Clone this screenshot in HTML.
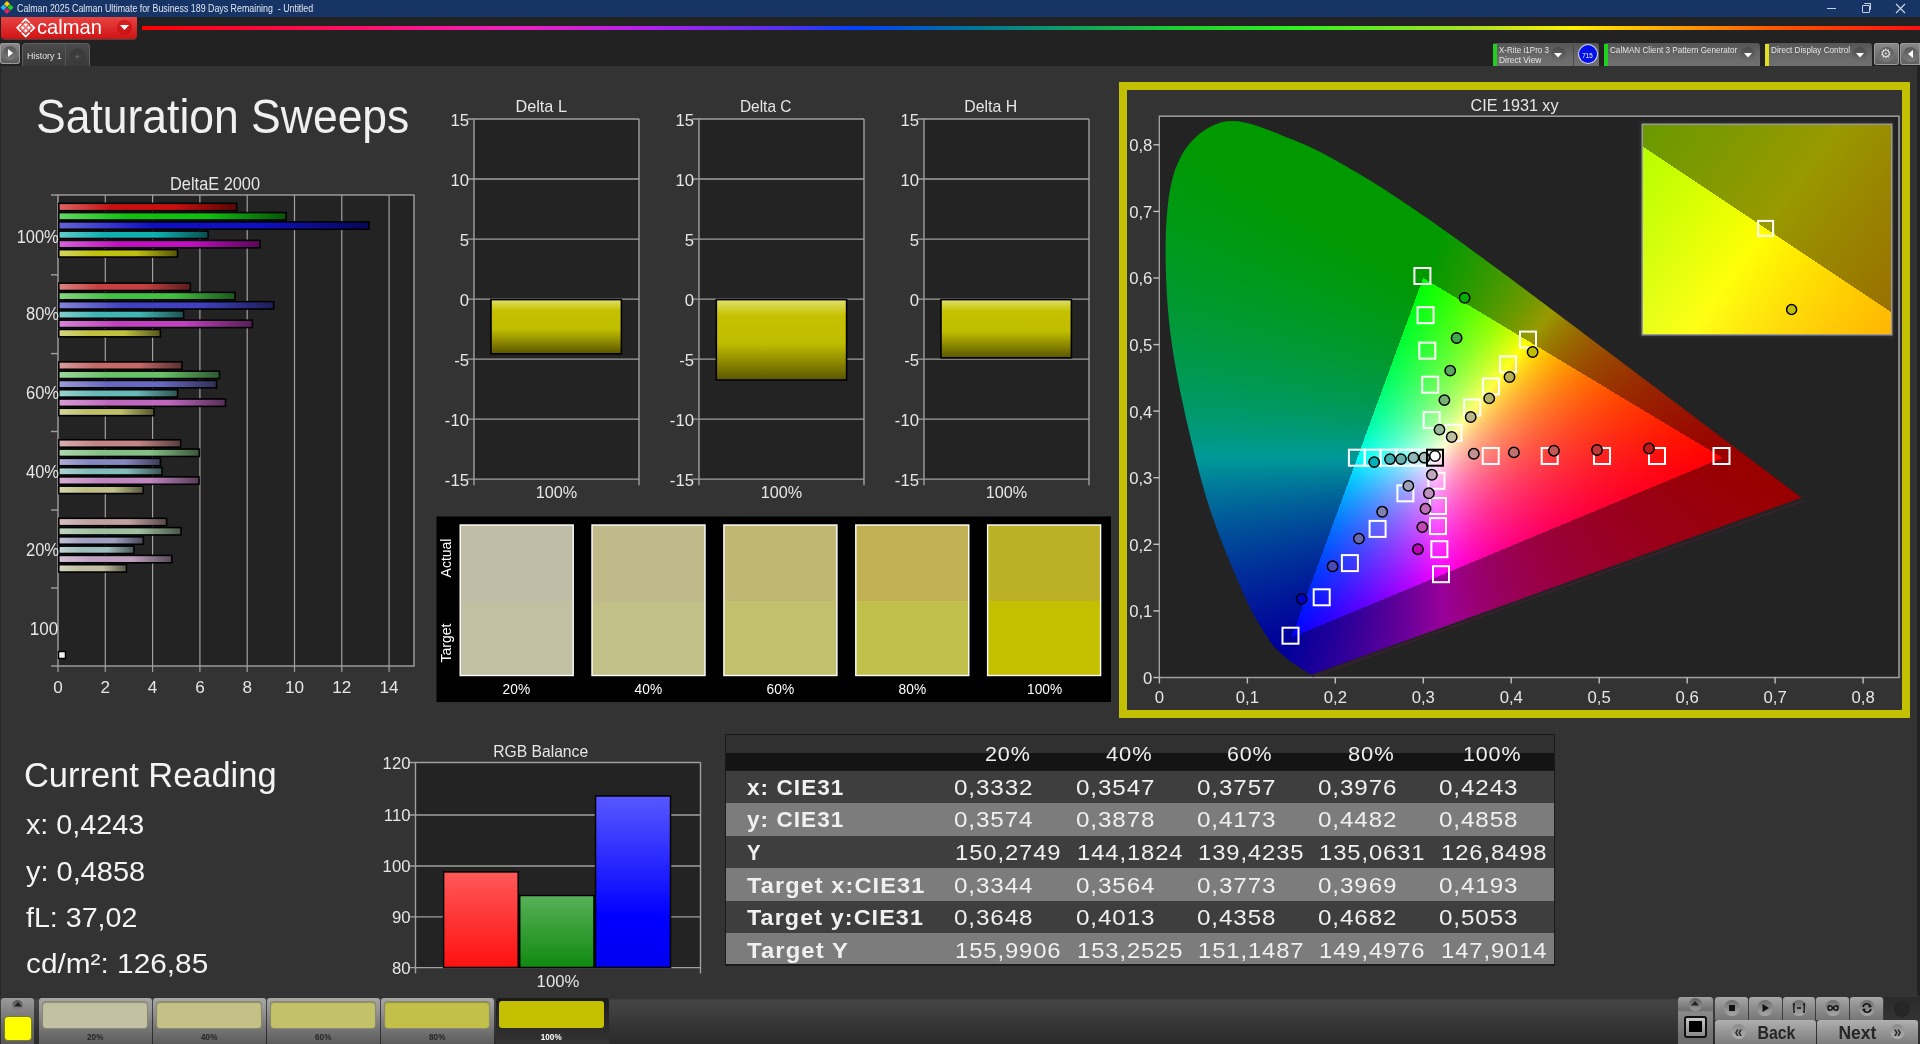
<!DOCTYPE html>
<html><head><meta charset="utf-8">
<style>
html,body{margin:0;padding:0;width:1920px;height:1044px;overflow:hidden;background:#333333;font-family:"Liberation Sans",sans-serif;}
.a{position:absolute;}
.nw{white-space:nowrap;}
svg text{font-family:"Liberation Sans",sans-serif;}
</style></head>
<body>
<div class="a" style="left:0;top:0;width:1920px;height:1044px;background:#333333"></div><div class="a" style="left:0;top:0;width:1920px;height:17px;background:#163466"></div><svg class="a" style="left:0;top:0" width="16" height="17" viewBox="0 0 16 17">
<polygon points="7,1 10,4 7,7 4,4" fill="#f5d000"/>
<polygon points="3.5,4.5 6.5,7.5 3.5,10.5 0.5,7.5" fill="#20b8f0"/>
<polygon points="10.5,4.5 13.5,7.5 10.5,10.5 7.5,7.5" fill="#20d020"/>
<polygon points="7,8 10,11 7,14 4,11" fill="#e82060"/>
</svg><div class="a nw" style="left:17.00px;top:2.47px;width:352.75px;font-size:10.47px;line-height:13px;color:#dfe5ef;transform:scaleX(0.8439);transform-origin:0 0;">Calman 2025 Calman Ultimate for Business 189 Days Remaining  - Untitled</div><div class="a" style="left:1827px;top:8px;width:9px;height:1px;background:#c8d0e0"></div><div class="a" style="left:1862px;top:5px;width:6px;height:6px;border:1px solid #c8d0e0;border-radius:1px"></div><div class="a" style="left:1864px;top:3px;width:6px;height:6px;border-top:1px solid #c8d0e0;border-right:1px solid #c8d0e0;border-radius:1px"></div><svg class="a" style="left:1895px;top:3px" width="11" height="11"><path d="M1,1 L10,10 M10,1 L1,10" stroke="#d0d8e8" stroke-width="1.1"/></svg><div class="a" style="left:0;top:17px;width:1920px;height:49px;background:#222222"></div><div class="a" style="left:1px;top:17px;width:136px;height:22px;border-radius:0 0 4px 4px;background:linear-gradient(#e84443,#d01212);box-shadow:0 1px 0 #444"></div><svg class="a" style="left:0;top:0" width="60" height="42">
<g fill="none" stroke="#fff" stroke-width="1.7" stroke-linecap="round">
<path d="M22.2,22.5 L25.7,19 L29.2,22.5"/>
<path d="M20.7,24.3 L17.2,27.8 L20.7,31.3"/>
<path d="M30.8,24.3 L34.3,27.8 L30.8,31.3"/>
<path d="M22.2,33.1 L25.7,36.6 L29.2,33.1"/>
</g>
<g fill="#fff">
<polygon points="25.75,22.9 27.5,24.65 25.75,26.4 24,24.65"/>
<polygon points="22.76,25.95 24.5,27.7 22.76,29.45 21,27.7"/>
<polygon points="28.75,25.95 30.5,27.7 28.75,29.45 27,27.7"/>
<polygon points="25.75,28.95 27.5,30.7 25.75,32.45 24,30.7"/>
</g>
<g fill="#fff" opacity="0.35"><polygon points="25.7,21.5 32,27.8 25.7,34.1 19.4,27.8"/></g>
</svg><div class="a nw" style="left:36.60px;top:14.19px;width:69.01px;font-size:20.78px;line-height:25px;color:#ffffff;transform:scaleX(0.9701);transform-origin:0 0;">calman</div><div class="a" style="left:117px;top:20px;width:15px;height:15px;border-radius:50%;background:radial-gradient(circle at 50% 30%,#d82020,#c01010)"></div><svg class="a" style="left:120px;top:25px" width="9" height="6"><polygon points="0,0 9,0 4.5,5" fill="#fff"/></svg><div class="a" style="left:142px;top:26px;width:1778px;height:4px;background:linear-gradient(90deg,#ff0000 0%,#ff1070 12.9%,#f020c0 20.8%,#b020f0 28.6%,#5030f0 36.4%,#0040ff 40.1%,#0070a0 46.2%,#10a060 52.4%,#20d030 58.5%,#30f020 65.1%,#b0e020 75.1%,#ffee00 80.5%,#ffb000 85.1%,#ff5000 92.4%,#ff1010 100%)"></div><div class="a" style="left:0;top:43px;width:20px;height:21px;border-radius:3px;background:linear-gradient(#8a8a8a,#5a5a5a);box-shadow:inset 0 0 0 1px #9a9a9a"></div><div class="a" style="left:3px;top:46px;width:14px;height:14px;border-radius:50%;background:linear-gradient(#555,#7a7a7a)"></div><svg class="a" style="left:8px;top:49px" width="6" height="9"><polygon points="0,0 5,4 0,8" fill="#fff"/></svg><div class="a" style="left:22px;top:43px;width:68px;height:23px;box-sizing:border-box;border:1px solid #606060;border-bottom:none;border-radius:4px 4px 0 0;background:linear-gradient(#4a4a4a,#3a3a3a)"></div><div class="a" style="left:65px;top:44px;width:1px;height:22px;background:#555"></div><div class="a nw" style="left:26.50px;top:50.32px;width:41.00px;font-size:9.88px;line-height:12px;color:#e0e0e0;transform:scaleX(0.8924);transform-origin:0 0;">History 1</div><div class="a" style="left:70.5px;top:49px;width:14px;height:14px;border-radius:50%;background:#3c3c3c;box-shadow:0 0 1px #2a2a2a"></div><div class="a nw" style="left:74.5px;top:50.5px;font-size:9px;line-height:12px;color:#777">+</div><div class="a" style="left:1492.6px;top:43.3px;width:106.6px;height:22.7px;border-radius:3px 3px 0 0;background:linear-gradient(#555,#6a6a6a 60%,#707070)"></div><div class="a" style="left:1493.1px;top:44px;width:4px;height:22px;background:#20d020"></div><div class="a nw" style="left:1498.60px;top:44.53px;width:55.38px;font-size:8.58px;line-height:11px;color:#e4e4e4;transform:scaleX(0.9367);transform-origin:0 0;">X-Rite i1Pro 3</div><div class="a nw" style="left:1498.60px;top:55.33px;width:45.21px;font-size:8.58px;line-height:11px;color:#e4e4e4;transform:scaleX(0.9812);transform-origin:0 0;">Direct View</div><div class="a" style="left:1550.5px;top:46.8px;width:15px;height:15px;border-radius:50%;background:linear-gradient(#4a4a4a,#6e6e6e)"></div><svg class="a" style="left:1554.0px;top:52.5px" width="8" height="5"><polygon points="0,0 8,0 4,4.5" fill="#fff"/></svg><div class="a" style="left:1572.5px;top:45px;width:1px;height:21px;background:#4a4a4a"></div><div class="a" style="left:1578.5px;top:45px;width:18px;height:18px;border-radius:50%;background:#0010e8;box-shadow:0 0 0 1px #d8d8ff"></div><div class="a nw" style="left:1581.19px;top:50.68px;width:14.61px;font-size:7.56px;line-height:10px;color:#fff;transform:scaleX(0.8326);transform-origin:50% 0;">715</div><div class="a" style="left:1603.8px;top:43.3px;width:156.2px;height:22.7px;border-radius:3px 3px 0 0;background:linear-gradient(#555,#6a6a6a 60%,#707070)"></div><div class="a" style="left:1604.3px;top:44px;width:4px;height:22px;background:#20d020"></div><div class="a nw" style="left:1609.80px;top:44.53px;width:136.41px;font-size:8.58px;line-height:11px;color:#e4e4e4;transform:scaleX(0.9463);transform-origin:0 0;">CalMAN Client 3 Pattern Generator</div><div class="a" style="left:1740.2px;top:46.8px;width:15px;height:15px;border-radius:50%;background:linear-gradient(#4a4a4a,#6e6e6e)"></div><svg class="a" style="left:1743.7px;top:52.5px" width="8" height="5"><polygon points="0,0 8,0 4,4.5" fill="#fff"/></svg><div class="a" style="left:1764.6px;top:43.3px;width:107.3px;height:22.7px;border-radius:3px 3px 0 0;background:linear-gradient(#555,#6a6a6a 60%,#707070)"></div><div class="a" style="left:1765.1px;top:44px;width:4px;height:22px;background:#e0e020"></div><div class="a nw" style="left:1770.60px;top:44.53px;width:84.92px;font-size:8.58px;line-height:11px;color:#e4e4e4;transform:scaleX(0.9527);transform-origin:0 0;">Direct Display Control</div><div class="a" style="left:1852.3px;top:46.8px;width:15px;height:15px;border-radius:50%;background:linear-gradient(#4a4a4a,#6e6e6e)"></div><svg class="a" style="left:1855.8px;top:52.5px" width="8" height="5"><polygon points="0,0 8,0 4,4.5" fill="#fff"/></svg><div class="a" style="left:1874px;top:43px;width:25px;height:22px;border-radius:3px;background:linear-gradient(#8a8a8a,#5e5e5e);box-shadow:inset 0 0 0 1px #9a9a9a"></div><div class="a" style="left:1879px;top:47px;width:15px;height:15px;border-radius:50%;background:linear-gradient(#5a5a5a,#7a7a7a)"></div><div class="a nw" style="left:1880px;top:46px;font-size:13px;line-height:15px;color:#ddd">&#9881;</div><div class="a" style="left:1900px;top:43px;width:20px;height:22px;border-radius:3px 0 0 3px;background:linear-gradient(#8a8a8a,#5e5e5e);box-shadow:inset 0 0 0 1px #9a9a9a"></div><div class="a" style="left:1903px;top:47px;width:15px;height:15px;border-radius:50%;background:linear-gradient(#5a5a5a,#7a7a7a)"></div><svg class="a" style="left:1907px;top:50px" width="6" height="9"><polygon points="6,0 1,4 6,8" fill="#fff"/></svg><div class="a" style="left:0;top:66px;width:1px;height:930px;background:#262626"></div><div class="a nw" style="left:35.60px;top:88.17px;width:402.19px;font-size:47.67px;line-height:58px;color:#f0f0f0;transform:scaleX(0.9333);transform-origin:0 0;">Saturation Sweeps</div><svg class="a" style="left:0;top:0" width="1920" height="1044"><defs><linearGradient id="de1" x1="0" x2="1" y1="0" y2="0"><stop offset="0" stop-color="#db6464"/><stop offset="0.3" stop-color="#c81010"/><stop offset="0.65" stop-color="#c81010"/><stop offset="1" stop-color="#5a0707"/></linearGradient><linearGradient id="de2" x1="0" x2="1" y1="0" y2="0"><stop offset="0" stop-color="#64d664"/><stop offset="0.3" stop-color="#10c010"/><stop offset="0.65" stop-color="#10c010"/><stop offset="1" stop-color="#075607"/></linearGradient><linearGradient id="de3" x1="0" x2="1" y1="0" y2="0"><stop offset="0" stop-color="#6464d6"/><stop offset="0.3" stop-color="#1010c0"/><stop offset="0.65" stop-color="#1010c0"/><stop offset="1" stop-color="#070756"/></linearGradient><linearGradient id="de4" x1="0" x2="1" y1="0" y2="0"><stop offset="0" stop-color="#64cccc"/><stop offset="0.3" stop-color="#10b0b0"/><stop offset="0.65" stop-color="#10b0b0"/><stop offset="1" stop-color="#074f4f"/></linearGradient><linearGradient id="de5" x1="0" x2="1" y1="0" y2="0"><stop offset="0" stop-color="#d664d6"/><stop offset="0.3" stop-color="#c010c0"/><stop offset="0.65" stop-color="#c010c0"/><stop offset="1" stop-color="#560756"/></linearGradient><linearGradient id="de6" x1="0" x2="1" y1="0" y2="0"><stop offset="0" stop-color="#d6d664"/><stop offset="0.3" stop-color="#c0c010"/><stop offset="0.65" stop-color="#c0c010"/><stop offset="1" stop-color="#565607"/></linearGradient><linearGradient id="de7" x1="0" x2="1" y1="0" y2="0"><stop offset="0" stop-color="#da8484"/><stop offset="0.3" stop-color="#c64141"/><stop offset="0.65" stop-color="#c64141"/><stop offset="1" stop-color="#591d1d"/></linearGradient><linearGradient id="de8" x1="0" x2="1" y1="0" y2="0"><stop offset="0" stop-color="#84d684"/><stop offset="0.3" stop-color="#41c041"/><stop offset="0.65" stop-color="#41c041"/><stop offset="1" stop-color="#1d561d"/></linearGradient><linearGradient id="de9" x1="0" x2="1" y1="0" y2="0"><stop offset="0" stop-color="#8484d6"/><stop offset="0.3" stop-color="#4141c0"/><stop offset="0.65" stop-color="#4141c0"/><stop offset="1" stop-color="#1d1d56"/></linearGradient><linearGradient id="de10" x1="0" x2="1" y1="0" y2="0"><stop offset="0" stop-color="#84cfcf"/><stop offset="0.3" stop-color="#41b4b4"/><stop offset="0.65" stop-color="#41b4b4"/><stop offset="1" stop-color="#1d5151"/></linearGradient><linearGradient id="de11" x1="0" x2="1" y1="0" y2="0"><stop offset="0" stop-color="#d684d6"/><stop offset="0.3" stop-color="#c041c0"/><stop offset="0.65" stop-color="#c041c0"/><stop offset="1" stop-color="#561d56"/></linearGradient><linearGradient id="de12" x1="0" x2="1" y1="0" y2="0"><stop offset="0" stop-color="#d6d684"/><stop offset="0.3" stop-color="#c0c041"/><stop offset="0.65" stop-color="#c0c041"/><stop offset="1" stop-color="#56561d"/></linearGradient><linearGradient id="de13" x1="0" x2="1" y1="0" y2="0"><stop offset="0" stop-color="#d99d9d"/><stop offset="0.3" stop-color="#c46868"/><stop offset="0.65" stop-color="#c46868"/><stop offset="1" stop-color="#582f2f"/></linearGradient><linearGradient id="de14" x1="0" x2="1" y1="0" y2="0"><stop offset="0" stop-color="#9dd69d"/><stop offset="0.3" stop-color="#68c068"/><stop offset="0.65" stop-color="#68c068"/><stop offset="1" stop-color="#2f562f"/></linearGradient><linearGradient id="de15" x1="0" x2="1" y1="0" y2="0"><stop offset="0" stop-color="#9d9dd6"/><stop offset="0.3" stop-color="#6868c0"/><stop offset="0.65" stop-color="#6868c0"/><stop offset="1" stop-color="#2f2f56"/></linearGradient><linearGradient id="de16" x1="0" x2="1" y1="0" y2="0"><stop offset="0" stop-color="#9dd1d1"/><stop offset="0.3" stop-color="#68b8b8"/><stop offset="0.65" stop-color="#68b8b8"/><stop offset="1" stop-color="#2f5353"/></linearGradient><linearGradient id="de17" x1="0" x2="1" y1="0" y2="0"><stop offset="0" stop-color="#d69dd6"/><stop offset="0.3" stop-color="#c068c0"/><stop offset="0.65" stop-color="#c068c0"/><stop offset="1" stop-color="#562f56"/></linearGradient><linearGradient id="de18" x1="0" x2="1" y1="0" y2="0"><stop offset="0" stop-color="#d6d69d"/><stop offset="0.3" stop-color="#c0c068"/><stop offset="0.65" stop-color="#c0c068"/><stop offset="1" stop-color="#56562f"/></linearGradient><linearGradient id="de19" x1="0" x2="1" y1="0" y2="0"><stop offset="0" stop-color="#d8b0b0"/><stop offset="0.3" stop-color="#c38686"/><stop offset="0.65" stop-color="#c38686"/><stop offset="1" stop-color="#583c3c"/></linearGradient><linearGradient id="de20" x1="0" x2="1" y1="0" y2="0"><stop offset="0" stop-color="#b0d6b0"/><stop offset="0.3" stop-color="#86c086"/><stop offset="0.65" stop-color="#86c086"/><stop offset="1" stop-color="#3c563c"/></linearGradient><linearGradient id="de21" x1="0" x2="1" y1="0" y2="0"><stop offset="0" stop-color="#b0b0d6"/><stop offset="0.3" stop-color="#8686c0"/><stop offset="0.65" stop-color="#8686c0"/><stop offset="1" stop-color="#3c3c56"/></linearGradient><linearGradient id="de22" x1="0" x2="1" y1="0" y2="0"><stop offset="0" stop-color="#b0d3d3"/><stop offset="0.3" stop-color="#86bbbb"/><stop offset="0.65" stop-color="#86bbbb"/><stop offset="1" stop-color="#3c5454"/></linearGradient><linearGradient id="de23" x1="0" x2="1" y1="0" y2="0"><stop offset="0" stop-color="#d6b0d6"/><stop offset="0.3" stop-color="#c086c0"/><stop offset="0.65" stop-color="#c086c0"/><stop offset="1" stop-color="#563c56"/></linearGradient><linearGradient id="de24" x1="0" x2="1" y1="0" y2="0"><stop offset="0" stop-color="#d6d6b0"/><stop offset="0.3" stop-color="#c0c086"/><stop offset="0.65" stop-color="#c0c086"/><stop offset="1" stop-color="#56563c"/></linearGradient><linearGradient id="de25" x1="0" x2="1" y1="0" y2="0"><stop offset="0" stop-color="#d7c1c1"/><stop offset="0.3" stop-color="#c1a0a0"/><stop offset="0.65" stop-color="#c1a0a0"/><stop offset="1" stop-color="#574848"/></linearGradient><linearGradient id="de26" x1="0" x2="1" y1="0" y2="0"><stop offset="0" stop-color="#c1d6c1"/><stop offset="0.3" stop-color="#a0c0a0"/><stop offset="0.65" stop-color="#a0c0a0"/><stop offset="1" stop-color="#485648"/></linearGradient><linearGradient id="de27" x1="0" x2="1" y1="0" y2="0"><stop offset="0" stop-color="#c1c1d6"/><stop offset="0.3" stop-color="#a0a0c0"/><stop offset="0.65" stop-color="#a0a0c0"/><stop offset="1" stop-color="#484856"/></linearGradient><linearGradient id="de28" x1="0" x2="1" y1="0" y2="0"><stop offset="0" stop-color="#c1d4d4"/><stop offset="0.3" stop-color="#a0bdbd"/><stop offset="0.65" stop-color="#a0bdbd"/><stop offset="1" stop-color="#485555"/></linearGradient><linearGradient id="de29" x1="0" x2="1" y1="0" y2="0"><stop offset="0" stop-color="#d6c1d6"/><stop offset="0.3" stop-color="#c0a0c0"/><stop offset="0.65" stop-color="#c0a0c0"/><stop offset="1" stop-color="#564856"/></linearGradient><linearGradient id="de30" x1="0" x2="1" y1="0" y2="0"><stop offset="0" stop-color="#d6d6c1"/><stop offset="0.3" stop-color="#c0c0a0"/><stop offset="0.65" stop-color="#c0c0a0"/><stop offset="1" stop-color="#565648"/></linearGradient><linearGradient id="ybar" x1="0" x2="0" y1="0" y2="1"><stop offset="0" stop-color="#e0e070"/><stop offset="0.2" stop-color="#c6c200"/><stop offset="0.55" stop-color="#c0bc00"/><stop offset="1" stop-color="#5a5600"/></linearGradient><linearGradient id="rb" x1="0" x2="0" y1="0" y2="1"><stop offset="0" stop-color="#ff5858"/><stop offset="1" stop-color="#ff1010"/></linearGradient><linearGradient id="gb" x1="0" x2="0" y1="0" y2="1"><stop offset="0" stop-color="#58b058"/><stop offset="1" stop-color="#108a10"/></linearGradient><linearGradient id="bb" x1="0" x2="0" y1="0" y2="1"><stop offset="0" stop-color="#5858ff"/><stop offset="0.7" stop-color="#0000ff"/><stop offset="1" stop-color="#0000f0"/></linearGradient></defs><rect x="58" y="195" width="356" height="471" fill="#232323"/><line x1="105.3" y1="195" x2="105.3" y2="672" stroke="#a0a0a0" stroke-width="1.2"/><line x1="152.6" y1="195" x2="152.6" y2="672" stroke="#a0a0a0" stroke-width="1.2"/><line x1="199.9" y1="195" x2="199.9" y2="672" stroke="#a0a0a0" stroke-width="1.2"/><line x1="247.2" y1="195" x2="247.2" y2="672" stroke="#a0a0a0" stroke-width="1.2"/><line x1="294.5" y1="195" x2="294.5" y2="672" stroke="#a0a0a0" stroke-width="1.2"/><line x1="341.8" y1="195" x2="341.8" y2="672" stroke="#a0a0a0" stroke-width="1.2"/><line x1="389.1" y1="195" x2="389.1" y2="672" stroke="#a0a0a0" stroke-width="1.2"/><rect x="58.0" y="195.0" width="356" height="471" fill="none" stroke="#a0a0a0" stroke-width="1.4"/><line x1="58.0" y1="666" x2="58.0" y2="672" stroke="#a0a0a0" stroke-width="1.2"/><line x1="51" y1="195.0" x2="58" y2="195.0" stroke="#a0a0a0" stroke-width="1.4"/><line x1="51" y1="274.8" x2="58" y2="274.8" stroke="#a0a0a0" stroke-width="1.4"/><line x1="51" y1="353.6" x2="58" y2="353.6" stroke="#a0a0a0" stroke-width="1.4"/><line x1="51" y1="431.5" x2="58" y2="431.5" stroke="#a0a0a0" stroke-width="1.4"/><line x1="51" y1="510.0" x2="58" y2="510.0" stroke="#a0a0a0" stroke-width="1.4"/><line x1="51" y1="588.0" x2="58" y2="588.0" stroke="#a0a0a0" stroke-width="1.4"/><line x1="51" y1="666.0" x2="58" y2="666.0" stroke="#a0a0a0" stroke-width="1.4"/><rect x="58.8" y="203.30" width="177.9" height="7.4" fill="url(#de1)" stroke="#000" stroke-width="1.6"/><rect x="58.8" y="212.57" width="227.2" height="7.4" fill="url(#de2)" stroke="#000" stroke-width="1.6"/><rect x="58.8" y="221.84" width="310.2" height="7.4" fill="url(#de3)" stroke="#000" stroke-width="1.6"/><rect x="58.8" y="231.11" width="149.2" height="7.4" fill="url(#de4)" stroke="#000" stroke-width="1.6"/><rect x="58.8" y="240.38" width="201.2" height="7.4" fill="url(#de5)" stroke="#000" stroke-width="1.6"/><rect x="58.8" y="249.65" width="118.7" height="7.4" fill="url(#de6)" stroke="#000" stroke-width="1.6"/><rect x="58.8" y="283.10" width="131.6" height="7.4" fill="url(#de7)" stroke="#000" stroke-width="1.6"/><rect x="58.8" y="292.37" width="176.2" height="7.4" fill="url(#de8)" stroke="#000" stroke-width="1.6"/><rect x="58.8" y="301.64" width="214.9" height="7.4" fill="url(#de9)" stroke="#000" stroke-width="1.6"/><rect x="58.8" y="310.91" width="124.8" height="7.4" fill="url(#de10)" stroke="#000" stroke-width="1.6"/><rect x="58.8" y="320.18" width="193.6" height="7.4" fill="url(#de11)" stroke="#000" stroke-width="1.6"/><rect x="58.8" y="329.45" width="101.6" height="7.4" fill="url(#de12)" stroke="#000" stroke-width="1.6"/><rect x="58.8" y="361.90" width="123.2" height="7.4" fill="url(#de13)" stroke="#000" stroke-width="1.6"/><rect x="58.8" y="371.17" width="160.7" height="7.4" fill="url(#de14)" stroke="#000" stroke-width="1.6"/><rect x="58.8" y="380.44" width="157.8" height="7.4" fill="url(#de15)" stroke="#000" stroke-width="1.6"/><rect x="58.8" y="389.71" width="118.8" height="7.4" fill="url(#de16)" stroke="#000" stroke-width="1.6"/><rect x="58.8" y="398.98" width="166.7" height="7.4" fill="url(#de17)" stroke="#000" stroke-width="1.6"/><rect x="58.8" y="408.25" width="95.2" height="7.4" fill="url(#de18)" stroke="#000" stroke-width="1.6"/><rect x="58.8" y="439.80" width="121.9" height="7.4" fill="url(#de19)" stroke="#000" stroke-width="1.6"/><rect x="58.8" y="449.07" width="140.5" height="7.4" fill="url(#de20)" stroke="#000" stroke-width="1.6"/><rect x="58.8" y="458.34" width="101.6" height="7.4" fill="url(#de21)" stroke="#000" stroke-width="1.6"/><rect x="58.8" y="467.61" width="103.2" height="7.4" fill="url(#de22)" stroke="#000" stroke-width="1.6"/><rect x="58.8" y="476.88" width="140.2" height="7.4" fill="url(#de23)" stroke="#000" stroke-width="1.6"/><rect x="58.8" y="486.15" width="84.5" height="7.4" fill="url(#de24)" stroke="#000" stroke-width="1.6"/><rect x="58.8" y="518.30" width="107.8" height="7.4" fill="url(#de25)" stroke="#000" stroke-width="1.6"/><rect x="58.8" y="527.57" width="122.2" height="7.4" fill="url(#de26)" stroke="#000" stroke-width="1.6"/><rect x="58.8" y="536.84" width="84.5" height="7.4" fill="url(#de27)" stroke="#000" stroke-width="1.6"/><rect x="58.8" y="546.11" width="75.2" height="7.4" fill="url(#de28)" stroke="#000" stroke-width="1.6"/><rect x="58.8" y="555.38" width="113.0" height="7.4" fill="url(#de29)" stroke="#000" stroke-width="1.6"/><rect x="58.8" y="564.65" width="67.7" height="7.4" fill="url(#de30)" stroke="#000" stroke-width="1.6"/><rect x="58.5" y="651.5" width="7" height="7" fill="#f0f0f0" stroke="#000" stroke-width="1.5"/><rect x="474" y="119" width="165" height="360.2" fill="#232323"/><line x1="467" y1="119.0" x2="639" y2="119.0" stroke="#a0a0a0" stroke-width="1.3"/><line x1="467" y1="179.0" x2="639" y2="179.0" stroke="#a0a0a0" stroke-width="1.3"/><line x1="467" y1="239.1" x2="639" y2="239.1" stroke="#a0a0a0" stroke-width="1.3"/><line x1="467" y1="299.1" x2="639" y2="299.1" stroke="#a0a0a0" stroke-width="1.3"/><line x1="467" y1="359.1" x2="639" y2="359.1" stroke="#a0a0a0" stroke-width="1.3"/><line x1="467" y1="419.1" x2="639" y2="419.1" stroke="#a0a0a0" stroke-width="1.3"/><line x1="467" y1="479.2" x2="639" y2="479.2" stroke="#a0a0a0" stroke-width="1.3"/><line x1="474" y1="119" x2="474" y2="485.2" stroke="#a0a0a0" stroke-width="1.4"/><line x1="639" y1="119" x2="639" y2="485.2" stroke="#a0a0a0" stroke-width="1.4"/><rect x="491.0" y="299.6" width="130.4" height="54.2" fill="url(#ybar)" stroke="#000" stroke-width="1.6"/><rect x="699" y="119" width="165" height="360.2" fill="#232323"/><line x1="692" y1="119.0" x2="864" y2="119.0" stroke="#a0a0a0" stroke-width="1.3"/><line x1="692" y1="179.0" x2="864" y2="179.0" stroke="#a0a0a0" stroke-width="1.3"/><line x1="692" y1="239.1" x2="864" y2="239.1" stroke="#a0a0a0" stroke-width="1.3"/><line x1="692" y1="299.1" x2="864" y2="299.1" stroke="#a0a0a0" stroke-width="1.3"/><line x1="692" y1="359.1" x2="864" y2="359.1" stroke="#a0a0a0" stroke-width="1.3"/><line x1="692" y1="419.1" x2="864" y2="419.1" stroke="#a0a0a0" stroke-width="1.3"/><line x1="692" y1="479.2" x2="864" y2="479.2" stroke="#a0a0a0" stroke-width="1.3"/><line x1="699" y1="119" x2="699" y2="485.2" stroke="#a0a0a0" stroke-width="1.4"/><line x1="864" y1="119" x2="864" y2="485.2" stroke="#a0a0a0" stroke-width="1.4"/><rect x="716.3" y="299.6" width="130.3" height="80.4" fill="url(#ybar)" stroke="#000" stroke-width="1.6"/><rect x="924" y="119" width="165" height="360.2" fill="#232323"/><line x1="917" y1="119.0" x2="1089" y2="119.0" stroke="#a0a0a0" stroke-width="1.3"/><line x1="917" y1="179.0" x2="1089" y2="179.0" stroke="#a0a0a0" stroke-width="1.3"/><line x1="917" y1="239.1" x2="1089" y2="239.1" stroke="#a0a0a0" stroke-width="1.3"/><line x1="917" y1="299.1" x2="1089" y2="299.1" stroke="#a0a0a0" stroke-width="1.3"/><line x1="917" y1="359.1" x2="1089" y2="359.1" stroke="#a0a0a0" stroke-width="1.3"/><line x1="917" y1="419.1" x2="1089" y2="419.1" stroke="#a0a0a0" stroke-width="1.3"/><line x1="917" y1="479.2" x2="1089" y2="479.2" stroke="#a0a0a0" stroke-width="1.3"/><line x1="924" y1="119" x2="924" y2="485.2" stroke="#a0a0a0" stroke-width="1.4"/><line x1="1089" y1="119" x2="1089" y2="485.2" stroke="#a0a0a0" stroke-width="1.4"/><rect x="941.0" y="299.6" width="130.4" height="58.2" fill="url(#ybar)" stroke="#000" stroke-width="1.6"/><rect x="436.5" y="516.5" width="674.5" height="185.5" fill="#000"/><rect x="460.2" y="525" width="113" height="75.5" fill="#bfbda5"/><rect x="460.2" y="600.5" width="113" height="75" fill="#c1c0a2"/><rect x="460.2" y="525" width="113" height="76" fill="#bfbda5"/><rect x="460.2" y="525" width="113" height="150.5" fill="none" stroke="#fff" stroke-width="1.4"/><rect x="592.0" y="525" width="113" height="75.5" fill="#c0b98a"/><rect x="592.0" y="600.5" width="113" height="75" fill="#c1c088"/><rect x="592.0" y="525" width="113" height="76" fill="#c0b98a"/><rect x="592.0" y="525" width="113" height="150.5" fill="none" stroke="#fff" stroke-width="1.4"/><rect x="723.9" y="525" width="113" height="75.5" fill="#c1b775"/><rect x="723.9" y="600.5" width="113" height="75" fill="#c2c06c"/><rect x="723.9" y="525" width="113" height="76" fill="#c1b775"/><rect x="723.9" y="525" width="113" height="150.5" fill="none" stroke="#fff" stroke-width="1.4"/><rect x="855.8" y="525" width="113" height="75.5" fill="#c2b154"/><rect x="855.8" y="600.5" width="113" height="75" fill="#c1c04a"/><rect x="855.8" y="525" width="113" height="76" fill="#c2b154"/><rect x="855.8" y="525" width="113" height="150.5" fill="none" stroke="#fff" stroke-width="1.4"/><rect x="987.6" y="525" width="113" height="75.5" fill="#bcb024"/><rect x="987.6" y="600.5" width="113" height="75" fill="#c4c000"/><rect x="987.6" y="525" width="113" height="76" fill="#bcb024"/><rect x="987.6" y="525" width="113" height="150.5" fill="none" stroke="#fff" stroke-width="1.4"/><rect x="415.5" y="762.4" width="285.0" height="205.1" fill="#232323"/><line x1="408.5" y1="762.5" x2="700.5" y2="762.5" stroke="#a0a0a0" stroke-width="1.3"/><line x1="408.5" y1="815.0" x2="700.5" y2="815.0" stroke="#a0a0a0" stroke-width="1.3"/><line x1="408.5" y1="866.0" x2="700.5" y2="866.0" stroke="#a0a0a0" stroke-width="1.3"/><line x1="408.5" y1="916.8" x2="700.5" y2="916.8" stroke="#a0a0a0" stroke-width="1.3"/><line x1="408.5" y1="967.6" x2="700.5" y2="967.6" stroke="#a0a0a0" stroke-width="1.3"/><line x1="415.5" y1="762.4" x2="415.5" y2="973.5" stroke="#a0a0a0" stroke-width="1.4"/><line x1="700.5" y1="762.4" x2="700.5" y2="973.5" stroke="#a0a0a0" stroke-width="1.4"/><rect x="443.6" y="871.9" width="74.6" height="95.6" fill="url(#rb)" stroke="#000" stroke-width="1.5"/><rect x="519.7" y="895.5" width="74.3" height="72.0" fill="url(#gb)" stroke="#000" stroke-width="1.5"/><rect x="595.5" y="796.0" width="75.0" height="171.5" fill="url(#bb)" stroke="#000" stroke-width="1.5"/></svg><div class="a nw" style="left:53.23px;top:676.55px;width:11.54px;font-size:17.15px;line-height:21px;color:#e6e6e6;">0</div><div class="a nw" style="left:100.53px;top:676.55px;width:11.54px;font-size:17.15px;line-height:21px;color:#e6e6e6;">2</div><div class="a nw" style="left:147.83px;top:676.55px;width:11.54px;font-size:17.15px;line-height:21px;color:#e6e6e6;">4</div><div class="a nw" style="left:195.13px;top:676.55px;width:11.54px;font-size:17.15px;line-height:21px;color:#e6e6e6;">6</div><div class="a nw" style="left:242.43px;top:676.55px;width:11.54px;font-size:17.15px;line-height:21px;color:#e6e6e6;">8</div><div class="a nw" style="left:284.96px;top:676.55px;width:21.08px;font-size:17.15px;line-height:21px;color:#e6e6e6;">10</div><div class="a nw" style="left:332.26px;top:676.55px;width:21.08px;font-size:17.15px;line-height:21px;color:#e6e6e6;">12</div><div class="a nw" style="left:379.56px;top:676.55px;width:21.08px;font-size:17.15px;line-height:21px;color:#e6e6e6;">14</div><div class="a nw" style="left:167.00px;top:173.95px;width:98.00px;font-size:17.44px;line-height:21px;color:#e6e6e6;transform:scaleX(0.9375);transform-origin:50% 0;">DeltaE 2000</div><div class="a nw" style="left:13.89px;top:226.95px;width:46.61px;font-size:17.44px;line-height:21px;color:#e6e6e6;transform:scaleX(0.9415);transform-origin:100% 0;">100%</div><div class="a nw" style="left:23.59px;top:304.45px;width:36.91px;font-size:17.44px;line-height:21px;color:#e6e6e6;transform:scaleX(0.9453);transform-origin:100% 0;">80%</div><div class="a nw" style="left:23.59px;top:382.95px;width:36.91px;font-size:17.44px;line-height:21px;color:#e6e6e6;transform:scaleX(0.9453);transform-origin:100% 0;">60%</div><div class="a nw" style="left:23.59px;top:461.95px;width:36.91px;font-size:17.44px;line-height:21px;color:#e6e6e6;transform:scaleX(0.9453);transform-origin:100% 0;">40%</div><div class="a nw" style="left:23.59px;top:539.95px;width:36.91px;font-size:17.44px;line-height:21px;color:#e6e6e6;transform:scaleX(0.9453);transform-origin:100% 0;">20%</div><div class="a nw" style="left:29.40px;top:618.95px;width:31.10px;font-size:17.44px;line-height:21px;color:#e6e6e6;transform:scaleX(0.9793);transform-origin:100% 0;">100</div><div class="a nw" style="left:450.41px;top:109.50px;width:20.59px;font-size:16.72px;line-height:21px;color:#e6e6e6;">15</div><div class="a nw" style="left:450.41px;top:169.53px;width:20.59px;font-size:16.72px;line-height:21px;color:#e6e6e6;">10</div><div class="a nw" style="left:459.70px;top:229.56px;width:11.30px;font-size:16.72px;line-height:21px;color:#e6e6e6;">5</div><div class="a nw" style="left:459.70px;top:289.59px;width:11.30px;font-size:16.72px;line-height:21px;color:#e6e6e6;">0</div><div class="a nw" style="left:454.14px;top:349.62px;width:16.86px;font-size:16.72px;line-height:21px;color:#e6e6e6;">-5</div><div class="a nw" style="left:444.84px;top:409.65px;width:26.16px;font-size:16.72px;line-height:21px;color:#e6e6e6;">-10</div><div class="a nw" style="left:444.84px;top:469.68px;width:26.16px;font-size:16.72px;line-height:21px;color:#e6e6e6;">-15</div><div class="a nw" style="left:513.83px;top:95.55px;width:56.34px;font-size:17.15px;line-height:21px;color:#e6e6e6;transform:scaleX(0.9477);transform-origin:50% 0;">Delta L</div><div class="a nw" style="left:534.62px;top:481.70px;width:44.75px;font-size:16.72px;line-height:21px;color:#e6e6e6;transform:scaleX(0.9707);transform-origin:50% 0;">100%</div><div class="a nw" style="left:675.41px;top:109.50px;width:20.59px;font-size:16.72px;line-height:21px;color:#e6e6e6;">15</div><div class="a nw" style="left:675.41px;top:169.53px;width:20.59px;font-size:16.72px;line-height:21px;color:#e6e6e6;">10</div><div class="a nw" style="left:684.70px;top:229.56px;width:11.30px;font-size:16.72px;line-height:21px;color:#e6e6e6;">5</div><div class="a nw" style="left:684.70px;top:289.59px;width:11.30px;font-size:16.72px;line-height:21px;color:#e6e6e6;">0</div><div class="a nw" style="left:679.14px;top:349.62px;width:16.86px;font-size:16.72px;line-height:21px;color:#e6e6e6;">-5</div><div class="a nw" style="left:669.84px;top:409.65px;width:26.16px;font-size:16.72px;line-height:21px;color:#e6e6e6;">-10</div><div class="a nw" style="left:669.84px;top:469.68px;width:26.16px;font-size:16.72px;line-height:21px;color:#e6e6e6;">-15</div><div class="a nw" style="left:737.40px;top:95.55px;width:59.19px;font-size:17.15px;line-height:21px;color:#e6e6e6;transform:scaleX(0.9005);transform-origin:50% 0;">Delta C</div><div class="a nw" style="left:759.62px;top:481.70px;width:44.75px;font-size:16.72px;line-height:21px;color:#e6e6e6;transform:scaleX(0.9707);transform-origin:50% 0;">100%</div><div class="a nw" style="left:900.41px;top:109.50px;width:20.59px;font-size:16.72px;line-height:21px;color:#e6e6e6;">15</div><div class="a nw" style="left:900.41px;top:169.53px;width:20.59px;font-size:16.72px;line-height:21px;color:#e6e6e6;">10</div><div class="a nw" style="left:909.70px;top:229.56px;width:11.30px;font-size:16.72px;line-height:21px;color:#e6e6e6;">5</div><div class="a nw" style="left:909.70px;top:289.59px;width:11.30px;font-size:16.72px;line-height:21px;color:#e6e6e6;">0</div><div class="a nw" style="left:904.14px;top:349.62px;width:16.86px;font-size:16.72px;line-height:21px;color:#e6e6e6;">-5</div><div class="a nw" style="left:894.84px;top:409.65px;width:26.16px;font-size:16.72px;line-height:21px;color:#e6e6e6;">-10</div><div class="a nw" style="left:894.84px;top:469.68px;width:26.16px;font-size:16.72px;line-height:21px;color:#e6e6e6;">-15</div><div class="a nw" style="left:962.40px;top:95.55px;width:59.19px;font-size:17.15px;line-height:21px;color:#e6e6e6;transform:scaleX(0.9267);transform-origin:50% 0;">Delta H</div><div class="a nw" style="left:984.62px;top:481.70px;width:44.75px;font-size:16.72px;line-height:21px;color:#e6e6e6;transform:scaleX(0.9707);transform-origin:50% 0;">100%</div><div class="a nw" style="left:501.43px;top:679.21px;width:32.55px;font-size:15.26px;line-height:19px;color:#ffffff;transform:scaleX(0.9003);transform-origin:50% 0;">20%</div><div class="a nw" style="left:633.28px;top:679.21px;width:32.55px;font-size:15.26px;line-height:19px;color:#ffffff;transform:scaleX(0.9003);transform-origin:50% 0;">40%</div><div class="a nw" style="left:765.13px;top:679.21px;width:32.55px;font-size:15.26px;line-height:19px;color:#ffffff;transform:scaleX(0.9003);transform-origin:50% 0;">60%</div><div class="a nw" style="left:896.98px;top:679.21px;width:32.55px;font-size:15.26px;line-height:19px;color:#ffffff;transform:scaleX(0.9003);transform-origin:50% 0;">80%</div><div class="a nw" style="left:1024.58px;top:679.21px;width:41.03px;font-size:15.26px;line-height:19px;color:#ffffff;transform:scaleX(0.8967);transform-origin:50% 0;">100%</div><div class="a nw" style="left:436px;top:547.5px;width:20px;height:20px;"><div style="position:absolute;left:10px;top:10px;transform:translate(-50%,-50%) rotate(-90deg);font-size:14px;line-height:14px;color:#fff;white-space:nowrap">Actual</div></div><div class="a nw" style="left:436px;top:632.5px;width:20px;height:20px;"><div style="position:absolute;left:10px;top:10px;transform:translate(-50%,-50%) rotate(-90deg);font-size:14px;line-height:14px;color:#fff;white-space:nowrap">Target</div></div><div class="a nw" style="left:382.61px;top:752.70px;width:29.89px;font-size:16.72px;line-height:21px;color:#e6e6e6;">120</div><div class="a nw" style="left:383.85px;top:805.20px;width:28.65px;font-size:16.72px;line-height:21px;color:#e6e6e6;">110</div><div class="a nw" style="left:382.61px;top:856.20px;width:29.89px;font-size:16.72px;line-height:21px;color:#e6e6e6;">100</div><div class="a nw" style="left:391.91px;top:907.00px;width:20.59px;font-size:16.72px;line-height:21px;color:#e6e6e6;">90</div><div class="a nw" style="left:391.91px;top:957.80px;width:20.59px;font-size:16.72px;line-height:21px;color:#e6e6e6;">80</div><div class="a nw" style="left:490.36px;top:740.70px;width:103.27px;font-size:16.72px;line-height:21px;color:#e6e6e6;transform:scaleX(0.9381);transform-origin:50% 0;">RGB Balance</div><div class="a nw" style="left:536.62px;top:970.70px;width:44.75px;font-size:16.72px;line-height:21px;color:#e6e6e6;">100%</div><div class="a nw" style="left:24.20px;top:753.51px;width:257.96px;font-size:34.88px;line-height:42px;color:#f4f4f4;transform:scaleX(0.9869);transform-origin:0 0;">Current Reading</div><div class="a nw" style="left:25.50px;top:808.47px;width:117.42px;font-size:28.05px;line-height:34px;color:#f4f4f4;transform:scaleX(1.0241);transform-origin:0 0;">x: 0,4243</div><div class="a nw" style="left:25.50px;top:854.87px;width:117.42px;font-size:28.05px;line-height:34px;color:#f4f4f4;transform:scaleX(1.0328);transform-origin:0 0;">y: 0,4858</div><div class="a nw" style="left:25.50px;top:900.87px;width:111.18px;font-size:28.05px;line-height:34px;color:#f4f4f4;transform:scaleX(1.0203);transform-origin:0 0;">fL: 37,02</div><div class="a nw" style="left:25.50px;top:947.07px;width:173.52px;font-size:28.05px;line-height:34px;color:#f4f4f4;transform:scaleX(1.0628);transform-origin:0 0;">cd/m²: 126,85</div><div class="a" style="left:724.5px;top:734px;width:830.5px;height:231.5px;background:#1a1a1a"></div><div class="a" style="left:726.0px;top:735px;width:827.5px;height:17.5px;background:#303030"></div><div class="a" style="left:726.0px;top:752.5px;width:827.5px;height:17.5px;background:#141414"></div><div class="a" style="left:726.0px;top:770.5px;width:827.5px;height:32.0px;background:#3e3e3e"></div><div class="a nw" style="left:746.50px;top:775.24px;width:94.89px;font-size:21.51px;line-height:26px;color:#f0f0f0;font-weight:bold;letter-spacing:1.00px;transform:scaleX(1.0496);transform-origin:0 0;">x: CIE31</div><div class="a nw" style="left:954.20px;top:775.24px;width:72.60px;font-size:21.51px;line-height:26px;color:#f0f0f0;letter-spacing:0.80px;transform:scaleX(1.1261);transform-origin:0 0;">0,3332</div><div class="a nw" style="left:1075.80px;top:775.24px;width:72.60px;font-size:21.51px;line-height:26px;color:#f0f0f0;letter-spacing:0.80px;transform:scaleX(1.1261);transform-origin:0 0;">0,3547</div><div class="a nw" style="left:1196.70px;top:775.24px;width:72.60px;font-size:21.51px;line-height:26px;color:#f0f0f0;letter-spacing:0.80px;transform:scaleX(1.1261);transform-origin:0 0;">0,3757</div><div class="a nw" style="left:1318.00px;top:775.24px;width:72.60px;font-size:21.51px;line-height:26px;color:#f0f0f0;letter-spacing:0.80px;transform:scaleX(1.1261);transform-origin:0 0;">0,3976</div><div class="a nw" style="left:1439.30px;top:775.24px;width:72.60px;font-size:21.51px;line-height:26px;color:#f0f0f0;letter-spacing:0.80px;transform:scaleX(1.1261);transform-origin:0 0;">0,4243</div><div class="a" style="left:726.0px;top:802.5px;width:827.5px;height:33.0px;background:#7c7c7c"></div><div class="a nw" style="left:746.50px;top:807.24px;width:94.89px;font-size:21.51px;line-height:26px;color:#f0f0f0;font-weight:bold;letter-spacing:1.00px;transform:scaleX(1.0485);transform-origin:0 0;">y: CIE31</div><div class="a nw" style="left:954.20px;top:807.24px;width:72.60px;font-size:21.51px;line-height:26px;color:#f0f0f0;letter-spacing:0.80px;transform:scaleX(1.1261);transform-origin:0 0;">0,3574</div><div class="a nw" style="left:1075.80px;top:807.24px;width:72.60px;font-size:21.51px;line-height:26px;color:#f0f0f0;letter-spacing:0.80px;transform:scaleX(1.1261);transform-origin:0 0;">0,3878</div><div class="a nw" style="left:1196.70px;top:807.24px;width:72.60px;font-size:21.51px;line-height:26px;color:#f0f0f0;letter-spacing:0.80px;transform:scaleX(1.1261);transform-origin:0 0;">0,4173</div><div class="a nw" style="left:1318.00px;top:807.24px;width:72.60px;font-size:21.51px;line-height:26px;color:#f0f0f0;letter-spacing:0.80px;transform:scaleX(1.1261);transform-origin:0 0;">0,4482</div><div class="a nw" style="left:1439.30px;top:807.24px;width:72.60px;font-size:21.51px;line-height:26px;color:#f0f0f0;letter-spacing:0.80px;transform:scaleX(1.1261);transform-origin:0 0;">0,4858</div><div class="a" style="left:726.0px;top:835.5px;width:827.5px;height:32.5px;background:#3e3e3e"></div><div class="a nw" style="left:746.50px;top:840.24px;width:17.35px;font-size:21.51px;line-height:26px;color:#f0f0f0;font-weight:bold;letter-spacing:1.00px;transform:scaleX(0.9512);transform-origin:0 0;">Y</div><div class="a nw" style="left:955.40px;top:840.24px;width:98.13px;font-size:21.51px;line-height:26px;color:#f0f0f0;letter-spacing:0.80px;transform:scaleX(1.1079);transform-origin:0 0;">150,2749</div><div class="a nw" style="left:1077.00px;top:840.24px;width:98.13px;font-size:21.51px;line-height:26px;color:#f0f0f0;letter-spacing:0.80px;transform:scaleX(1.1079);transform-origin:0 0;">144,1824</div><div class="a nw" style="left:1197.90px;top:840.24px;width:98.13px;font-size:21.51px;line-height:26px;color:#f0f0f0;letter-spacing:0.80px;transform:scaleX(1.1079);transform-origin:0 0;">139,4235</div><div class="a nw" style="left:1319.20px;top:840.24px;width:98.13px;font-size:21.51px;line-height:26px;color:#f0f0f0;letter-spacing:0.80px;transform:scaleX(1.1079);transform-origin:0 0;">135,0631</div><div class="a nw" style="left:1440.50px;top:840.24px;width:98.13px;font-size:21.51px;line-height:26px;color:#f0f0f0;letter-spacing:0.80px;transform:scaleX(1.1079);transform-origin:0 0;">126,8498</div><div class="a" style="left:726.0px;top:868.0px;width:827.5px;height:32.5px;background:#7c7c7c"></div><div class="a nw" style="left:746.50px;top:872.74px;width:165.04px;font-size:21.51px;line-height:26px;color:#f0f0f0;font-weight:bold;letter-spacing:1.00px;transform:scaleX(1.0942);transform-origin:0 0;">Target x:CIE31</div><div class="a nw" style="left:954.20px;top:872.74px;width:72.60px;font-size:21.51px;line-height:26px;color:#f0f0f0;letter-spacing:0.80px;transform:scaleX(1.1261);transform-origin:0 0;">0,3344</div><div class="a nw" style="left:1075.80px;top:872.74px;width:72.60px;font-size:21.51px;line-height:26px;color:#f0f0f0;letter-spacing:0.80px;transform:scaleX(1.1261);transform-origin:0 0;">0,3564</div><div class="a nw" style="left:1196.70px;top:872.74px;width:72.60px;font-size:21.51px;line-height:26px;color:#f0f0f0;letter-spacing:0.80px;transform:scaleX(1.1261);transform-origin:0 0;">0,3773</div><div class="a nw" style="left:1318.00px;top:872.74px;width:72.60px;font-size:21.51px;line-height:26px;color:#f0f0f0;letter-spacing:0.80px;transform:scaleX(1.1261);transform-origin:0 0;">0,3969</div><div class="a nw" style="left:1439.30px;top:872.74px;width:72.60px;font-size:21.51px;line-height:26px;color:#f0f0f0;letter-spacing:0.80px;transform:scaleX(1.1261);transform-origin:0 0;">0,4193</div><div class="a" style="left:726.0px;top:900.5px;width:827.5px;height:32.5px;background:#3e3e3e"></div><div class="a nw" style="left:746.50px;top:905.24px;width:165.04px;font-size:21.51px;line-height:26px;color:#f0f0f0;font-weight:bold;letter-spacing:1.00px;transform:scaleX(1.0862);transform-origin:0 0;">Target y:CIE31</div><div class="a nw" style="left:954.20px;top:905.24px;width:72.60px;font-size:21.51px;line-height:26px;color:#f0f0f0;letter-spacing:0.80px;transform:scaleX(1.1261);transform-origin:0 0;">0,3648</div><div class="a nw" style="left:1075.80px;top:905.24px;width:72.60px;font-size:21.51px;line-height:26px;color:#f0f0f0;letter-spacing:0.80px;transform:scaleX(1.1261);transform-origin:0 0;">0,4013</div><div class="a nw" style="left:1196.70px;top:905.24px;width:72.60px;font-size:21.51px;line-height:26px;color:#f0f0f0;letter-spacing:0.80px;transform:scaleX(1.1261);transform-origin:0 0;">0,4358</div><div class="a nw" style="left:1318.00px;top:905.24px;width:72.60px;font-size:21.51px;line-height:26px;color:#f0f0f0;letter-spacing:0.80px;transform:scaleX(1.1261);transform-origin:0 0;">0,4682</div><div class="a nw" style="left:1439.30px;top:905.24px;width:72.60px;font-size:21.51px;line-height:26px;color:#f0f0f0;letter-spacing:0.80px;transform:scaleX(1.1261);transform-origin:0 0;">0,5053</div><div class="a" style="left:726.0px;top:933.0px;width:827.5px;height:31.0px;background:#7c7c7c"></div><div class="a nw" style="left:746.50px;top:937.74px;width:94.09px;font-size:21.51px;line-height:26px;color:#f0f0f0;font-weight:bold;letter-spacing:1.00px;transform:scaleX(1.1098);transform-origin:0 0;">Target Y</div><div class="a nw" style="left:955.40px;top:937.74px;width:98.13px;font-size:21.51px;line-height:26px;color:#f0f0f0;letter-spacing:0.80px;transform:scaleX(1.1079);transform-origin:0 0;">155,9906</div><div class="a nw" style="left:1077.00px;top:937.74px;width:98.13px;font-size:21.51px;line-height:26px;color:#f0f0f0;letter-spacing:0.80px;transform:scaleX(1.1079);transform-origin:0 0;">153,2525</div><div class="a nw" style="left:1197.90px;top:937.74px;width:98.13px;font-size:21.51px;line-height:26px;color:#f0f0f0;letter-spacing:0.80px;transform:scaleX(1.1079);transform-origin:0 0;">151,1487</div><div class="a nw" style="left:1319.20px;top:937.74px;width:98.13px;font-size:21.51px;line-height:26px;color:#f0f0f0;letter-spacing:0.80px;transform:scaleX(1.1079);transform-origin:0 0;">149,4976</div><div class="a nw" style="left:1440.50px;top:937.74px;width:98.13px;font-size:21.51px;line-height:26px;color:#f0f0f0;letter-spacing:0.80px;transform:scaleX(1.1079);transform-origin:0 0;">147,9014</div><div class="a nw" style="left:985.00px;top:742.25px;width:43.38px;font-size:19.48px;line-height:24px;color:#f0f0f0;letter-spacing:0.80px;transform:scaleX(1.1068);transform-origin:0 0;">20%</div><div class="a nw" style="left:1105.50px;top:742.25px;width:43.38px;font-size:19.48px;line-height:24px;color:#f0f0f0;letter-spacing:0.80px;transform:scaleX(1.1237);transform-origin:0 0;">40%</div><div class="a nw" style="left:1227.20px;top:742.25px;width:43.38px;font-size:19.48px;line-height:24px;color:#f0f0f0;letter-spacing:0.80px;transform:scaleX(1.1019);transform-origin:0 0;">60%</div><div class="a nw" style="left:1348.00px;top:742.25px;width:43.38px;font-size:19.48px;line-height:24px;color:#f0f0f0;letter-spacing:0.80px;transform:scaleX(1.1261);transform-origin:0 0;">80%</div><div class="a nw" style="left:1463.20px;top:742.25px;width:55.01px;font-size:19.48px;line-height:24px;color:#f0f0f0;letter-spacing:0.80px;transform:scaleX(1.1016);transform-origin:0 0;">100%</div><div class="a" style="left:1119px;top:82px;width:775px;height:620px;border:8px solid #c2c000;background:#333"></div><div class="a" style="left:1916.5px;top:66px;width:3.5px;height:930px;background:#222222"></div><svg class="a" style="left:0;top:0" width="1920" height="1044"><rect x="1159.4" y="116.2" width="739.6" height="561.3" fill="#232323" stroke="#a0a0a0" stroke-width="1.5"/><defs><linearGradient id="hs" gradientUnits="userSpaceOnUse" x1="0" y1="124.8" x2="0" y2="677.5"><stop offset="0" stop-color="#009800"/><stop offset="0.55" stop-color="#00968c"/><stop offset="1" stop-color="#0000b8"/></linearGradient><linearGradient id="hr" gradientUnits="userSpaceOnUse" x1="1423.3" y1="0" x2="1801.5" y2="0"><stop offset="0" stop-color="#209800"/><stop offset="0.45" stop-color="#8a8a00"/><stop offset="0.7" stop-color="#904000"/><stop offset="1" stop-color="#980000"/></linearGradient><linearGradient id="hb" gradientUnits="userSpaceOnUse" x1="1308.9" y1="0" x2="1801.5" y2="0"><stop offset="0" stop-color="#0000c0"/><stop offset="0.35" stop-color="#6000a0"/><stop offset="0.6" stop-color="#900040"/><stop offset="1" stop-color="#980000"/></linearGradient><linearGradient id="tr" gradientUnits="userSpaceOnUse" x1="1722.4" y1="457.8" x2="1400.6" y2="339.7"><stop offset="0" stop-color="#ff0000"/><stop offset="1" stop-color="#ff0000" stop-opacity="0"/></linearGradient><linearGradient id="tg" gradientUnits="userSpaceOnUse" x1="1423.3" y1="278.0" x2="1531.5" y2="537.4"><stop offset="0" stop-color="#00ff00"/><stop offset="1" stop-color="#00ff00" stop-opacity="0"/></linearGradient><linearGradient id="tb" gradientUnits="userSpaceOnUse" x1="1291.3" y1="637.5" x2="1485.1" y2="315.2"><stop offset="0" stop-color="#0000ff"/><stop offset="1" stop-color="#0000ff" stop-opacity="0"/></linearGradient><radialGradient id="tw" gradientUnits="userSpaceOnUse" cx="1434.5" cy="458.4" r="90"><stop offset="0" stop-color="#fff"/><stop offset="1" stop-color="#fff" stop-opacity="0"/></radialGradient></defs><polygon points="1312.5,674.2 1312.4,674.2 1312.3,674.2 1312.2,674.2 1312.1,674.3 1311.9,674.3 1311.7,674.4 1311.5,674.4 1311.3,674.4 1311.1,674.4 1310.8,674.3 1310.5,674.2 1310.2,674.1 1309.8,673.9 1309.4,673.7 1308.9,673.4 1308.4,673.1 1307.9,672.8 1307.4,672.5 1306.8,672.1 1306.3,671.7 1305.7,671.3 1305.1,671.0 1304.6,670.6 1304.0,670.2 1303.5,669.9 1303.0,669.6 1302.4,669.2 1301.9,668.9 1301.4,668.6 1300.9,668.2 1300.3,667.9 1299.8,667.5 1299.2,667.1 1298.5,666.7 1297.9,666.2 1297.1,665.7 1296.4,665.2 1295.6,664.7 1294.8,664.2 1294.0,663.7 1293.2,663.2 1292.3,662.6 1291.4,662.0 1290.4,661.3 1289.4,660.6 1288.3,659.7 1287.2,658.8 1286.1,657.7 1284.9,656.6 1283.6,655.6 1282.4,654.5 1281.1,653.4 1279.7,652.3 1278.3,651.0 1276.9,649.6 1275.3,648.0 1273.8,646.1 1272.1,644.1 1270.4,641.7 1268.6,639.0 1266.7,636.1 1264.7,633.2 1262.8,630.1 1260.7,626.9 1258.6,623.4 1256.4,619.7 1254.2,615.6 1251.8,611.2 1249.4,606.4 1246.8,601.2 1244.2,595.4 1241.5,589.1 1238.6,582.3 1235.5,575.1 1232.2,567.5 1228.8,559.4 1225.4,551.0 1221.9,542.1 1218.3,532.9 1214.8,523.2 1211.3,513.2 1207.9,502.9 1204.7,492.1 1201.5,481.1 1198.4,469.4 1195.2,456.9 1192.0,443.9 1188.7,430.3 1185.5,416.3 1182.4,402.1 1179.5,387.8 1176.7,373.5 1174.3,359.3 1172.1,345.4 1170.2,331.9 1168.8,319.0 1167.7,306.2 1166.8,293.3 1166.1,280.3 1165.7,267.3 1165.5,254.4 1165.6,241.8 1166.0,229.6 1166.6,217.9 1167.6,206.7 1168.9,196.3 1170.6,186.7 1172.6,178.0 1175.0,170.1 1177.8,162.9 1181.0,156.3 1184.6,150.3 1188.5,145.0 1192.6,140.2 1197.0,135.9 1201.6,132.2 1206.4,129.0 1211.3,126.3 1216.3,124.1 1221.4,122.3 1226.7,121.2 1232.4,120.9 1238.3,121.3 1244.5,122.4 1250.9,124.0 1257.4,126.0 1263.9,128.3 1270.5,130.8 1276.9,133.4 1283.3,136.0 1289.5,138.5 1295.5,140.9 1301.3,143.2 1307.0,145.6 1312.6,148.2 1318.1,150.9 1323.6,153.7 1329.1,156.6 1334.5,159.6 1339.9,162.7 1345.3,165.8 1350.6,168.9 1356.0,172.1 1361.4,175.2 1366.7,178.4 1372.1,181.7 1377.4,185.0 1382.7,188.3 1388.0,191.7 1393.2,195.2 1398.5,198.7 1403.7,202.2 1409.0,205.8 1414.2,209.3 1419.4,212.9 1424.7,216.5 1430.0,220.1 1435.2,223.8 1440.5,227.5 1445.7,231.2 1451.0,235.0 1456.2,238.8 1461.4,242.6 1466.7,246.4 1471.9,250.2 1477.1,254.0 1482.4,257.8 1487.6,261.7 1492.8,265.5 1498.0,269.3 1503.3,273.2 1508.5,277.1 1513.8,281.0 1519.0,284.9 1524.2,288.8 1529.4,292.7 1534.6,296.6 1539.8,300.4 1544.9,304.3 1550.0,308.1 1555.2,312.0 1560.3,315.8 1565.4,319.6 1570.5,323.5 1575.5,327.3 1580.6,331.1 1585.6,334.9 1590.6,338.7 1595.6,342.4 1600.5,346.2 1605.4,349.8 1610.2,353.5 1615.0,357.1 1619.8,360.7 1624.6,364.3 1629.3,367.9 1634.0,371.4 1638.7,374.9 1643.3,378.4 1647.9,381.9 1652.4,385.2 1656.8,388.6 1661.1,391.8 1665.4,395.0 1669.5,398.2 1673.6,401.3 1677.7,404.3 1681.7,407.4 1685.6,410.3 1689.5,413.2 1693.2,416.1 1696.9,418.9 1700.6,421.6 1704.1,424.3 1707.6,426.9 1710.9,429.5 1714.2,431.9 1717.4,434.3 1720.5,436.7 1723.6,439.0 1726.5,441.2 1729.4,443.4 1732.2,445.5 1735.0,447.5 1737.6,449.5 1740.2,451.4 1742.7,453.3 1745.1,455.1 1747.3,456.8 1749.5,458.4 1751.5,459.9 1753.4,461.4 1755.2,462.8 1757.0,464.1 1758.7,465.4 1760.4,466.7 1762.2,468.1 1763.9,469.4 1765.8,470.8 1767.7,472.2 1769.7,473.7 1771.8,475.3 1773.9,476.9 1776.1,478.6 1778.4,480.3 1780.6,481.9 1782.7,483.6 1784.8,485.1 1786.8,486.6 1788.6,488.0 1790.3,489.3 1791.9,490.5 1793.2,491.5 1794.4,492.4 1795.5,493.2 1796.5,494.0 1797.4,494.6 1798.2,495.2 1798.9,495.8 1799.6,496.2 1800.1,496.7 1800.6,497.1 1801.1,497.4 1801.5,497.7" fill="url(#hs)"/><polygon points="1423.3,278.0 1424.7,216.5 1430.0,220.1 1435.2,223.8 1440.5,227.5 1445.7,231.2 1451.0,235.0 1456.2,238.8 1461.4,242.6 1466.7,246.4 1471.9,250.2 1477.1,254.0 1482.4,257.8 1487.6,261.7 1492.8,265.5 1498.0,269.3 1503.3,273.2 1508.5,277.1 1513.8,281.0 1519.0,284.9 1524.2,288.8 1529.4,292.7 1534.6,296.6 1539.8,300.4 1544.9,304.3 1550.0,308.1 1555.2,312.0 1560.3,315.8 1565.4,319.6 1570.5,323.5 1575.5,327.3 1580.6,331.1 1585.6,334.9 1590.6,338.7 1595.6,342.4 1600.5,346.2 1605.4,349.8 1610.2,353.5 1615.0,357.1 1619.8,360.7 1624.6,364.3 1629.3,367.9 1634.0,371.4 1638.7,374.9 1643.3,378.4 1647.9,381.9 1652.4,385.2 1656.8,388.6 1661.1,391.8 1665.4,395.0 1669.5,398.2 1673.6,401.3 1677.7,404.3 1681.7,407.4 1685.6,410.3 1689.5,413.2 1693.2,416.1 1696.9,418.9 1700.6,421.6 1704.1,424.3 1707.6,426.9 1710.9,429.5 1714.2,431.9 1717.4,434.3 1720.5,436.7 1723.6,439.0 1726.5,441.2 1729.4,443.4 1732.2,445.5 1735.0,447.5 1737.6,449.5 1740.2,451.4 1742.7,453.3 1745.1,455.1 1747.3,456.8 1749.5,458.4 1751.5,459.9 1753.4,461.4 1755.2,462.8 1757.0,464.1 1758.7,465.4 1760.4,466.7 1762.2,468.1 1763.9,469.4 1765.8,470.8 1767.7,472.2 1769.7,473.7 1771.8,475.3 1773.9,476.9 1776.1,478.6 1778.4,480.3 1780.6,481.9 1782.7,483.6 1784.8,485.1 1786.8,486.6 1788.6,488.0 1790.3,489.3 1791.9,490.5 1793.2,491.5 1794.4,492.4 1795.5,493.2 1796.5,494.0 1797.4,494.6 1798.2,495.2 1798.9,495.8 1799.6,496.2 1800.1,496.7 1800.6,497.1 1801.1,497.4 1801.5,497.7 1722.4,457.8" fill="url(#hr)"/><polygon points="1291.3,637.5 1312.5,674.2 1801.5,497.7 1722.4,457.8" fill="url(#hb)"/><polygon points="1722.4,457.8 1423.3,278.0 1291.3,637.5" fill="#000"/><polygon points="1722.4,457.8 1423.3,278.0 1291.3,637.5" fill="url(#tr)" style="mix-blend-mode:screen"/><polygon points="1722.4,457.8 1423.3,278.0 1291.3,637.5" fill="url(#tg)" style="mix-blend-mode:screen"/><polygon points="1722.4,457.8 1423.3,278.0 1291.3,637.5" fill="url(#tb)" style="mix-blend-mode:screen"/><polygon points="1722.4,457.8 1423.3,278.0 1291.3,637.5" fill="url(#tw)"/><line x1="1159.4" y1="677.5" x2="1159.4" y2="683.5" stroke="#c0c0c0" stroke-width="1.4"/><line x1="1153.4" y1="677.5" x2="1159.4" y2="677.5" stroke="#c0c0c0" stroke-width="1.4"/><line x1="1247.4" y1="677.5" x2="1247.4" y2="683.5" stroke="#c0c0c0" stroke-width="1.4"/><line x1="1153.4" y1="610.9" x2="1159.4" y2="610.9" stroke="#c0c0c0" stroke-width="1.4"/><line x1="1335.3" y1="677.5" x2="1335.3" y2="683.5" stroke="#c0c0c0" stroke-width="1.4"/><line x1="1153.4" y1="544.3" x2="1159.4" y2="544.3" stroke="#c0c0c0" stroke-width="1.4"/><line x1="1423.3" y1="677.5" x2="1423.3" y2="683.5" stroke="#c0c0c0" stroke-width="1.4"/><line x1="1153.4" y1="477.7" x2="1159.4" y2="477.7" stroke="#c0c0c0" stroke-width="1.4"/><line x1="1511.2" y1="677.5" x2="1511.2" y2="683.5" stroke="#c0c0c0" stroke-width="1.4"/><line x1="1153.4" y1="411.1" x2="1159.4" y2="411.1" stroke="#c0c0c0" stroke-width="1.4"/><line x1="1599.2" y1="677.5" x2="1599.2" y2="683.5" stroke="#c0c0c0" stroke-width="1.4"/><line x1="1153.4" y1="344.6" x2="1159.4" y2="344.6" stroke="#c0c0c0" stroke-width="1.4"/><line x1="1687.2" y1="677.5" x2="1687.2" y2="683.5" stroke="#c0c0c0" stroke-width="1.4"/><line x1="1153.4" y1="278.0" x2="1159.4" y2="278.0" stroke="#c0c0c0" stroke-width="1.4"/><line x1="1775.1" y1="677.5" x2="1775.1" y2="683.5" stroke="#c0c0c0" stroke-width="1.4"/><line x1="1153.4" y1="211.4" x2="1159.4" y2="211.4" stroke="#c0c0c0" stroke-width="1.4"/><line x1="1863.1" y1="677.5" x2="1863.1" y2="683.5" stroke="#c0c0c0" stroke-width="1.4"/><line x1="1153.4" y1="144.8" x2="1159.4" y2="144.8" stroke="#c0c0c0" stroke-width="1.4"/></svg><canvas id="cie" class="a" width="738" height="559" style="left:1160px;top:117px"></canvas><div class="a" style="left:1639px;top:120.5px;width:255px;height:217px;background:#2a2a2a"></div><svg class="a" style="left:1643.0px;top:125.0px" width="249" height="209"><defs><linearGradient id="iy" x1="0" y1="0" x2="1" y2="1"><stop offset="0" stop-color="#b0ff00"/><stop offset="0.5" stop-color="#ffff10"/><stop offset="1" stop-color="#ffb000"/></linearGradient><linearGradient id="io" x1="0" y1="0" x2="1" y2="1"><stop offset="0" stop-color="#609000"/><stop offset="0.5" stop-color="#909000"/><stop offset="1" stop-color="#9a7000"/></linearGradient></defs><rect width="249" height="209" fill="url(#iy)"/><polygon points="0,0 249,0 249,187 0,21.8" fill="url(#io)"/></svg><canvas id="ins" class="a" width="248" height="209" style="left:1643.0px;top:125.0px;box-shadow:0 0 0 1.5px #9a9a9a"></canvas><script>
(function(){
var L=[[0.1741,0.0050],[0.1740,0.0050],[0.1739,0.0049],[0.1737,0.0049],[0.1736,0.0048],[0.1734,0.0047],[0.1732,0.0047],[0.1730,0.0046],[0.1727,0.0046],[0.1724,0.0047],[0.1721,0.0048],[0.1718,0.0049],[0.1714,0.0051],[0.1710,0.0054],[0.1705,0.0057],[0.1700,0.0061],[0.1694,0.0066],[0.1688,0.0071],[0.1682,0.0076],[0.1676,0.0081],[0.1670,0.0087],[0.1663,0.0092],[0.1657,0.0098],[0.1650,0.0104],[0.1644,0.0109],[0.1638,0.0114],[0.1632,0.0119],[0.1626,0.0124],[0.1620,0.0129],[0.1614,0.0134],[0.1608,0.0139],[0.1602,0.0144],[0.1596,0.0150],[0.1589,0.0156],[0.1582,0.0163],[0.1574,0.0169],[0.1566,0.0177],[0.1557,0.0185],[0.1549,0.0192],[0.1540,0.0200],[0.1530,0.0207],[0.1521,0.0215],[0.1511,0.0224],[0.1500,0.0233],[0.1489,0.0243],[0.1478,0.0254],[0.1466,0.0267],[0.1453,0.0281],[0.1440,0.0297],[0.1426,0.0313],[0.1412,0.0329],[0.1398,0.0345],[0.1383,0.0361],[0.1368,0.0379],[0.1352,0.0398],[0.1335,0.0420],[0.1318,0.0444],[0.1300,0.0471],[0.1281,0.0502],[0.1262,0.0538],[0.1241,0.0578],[0.1220,0.0621],[0.1198,0.0666],[0.1175,0.0712],[0.1152,0.0761],[0.1128,0.0813],[0.1103,0.0869],[0.1077,0.0929],[0.1051,0.0995],[0.1023,0.1067],[0.0994,0.1146],[0.0964,0.1232],[0.0933,0.1327],[0.0900,0.1429],[0.0865,0.1538],[0.0828,0.1652],[0.0789,0.1773],[0.0750,0.1900],[0.0710,0.2033],[0.0670,0.2172],[0.0630,0.2317],[0.0590,0.2467],[0.0552,0.2622],[0.0514,0.2784],[0.0479,0.2950],[0.0444,0.3125],[0.0407,0.3312],[0.0371,0.3509],[0.0334,0.3713],[0.0297,0.3923],[0.0262,0.4136],[0.0228,0.4351],[0.0197,0.4566],[0.0169,0.4779],[0.0144,0.4987],[0.0123,0.5190],[0.0107,0.5384],[0.0094,0.5576],[0.0084,0.5770],[0.0077,0.5966],[0.0072,0.6161],[0.0070,0.6354],[0.0071,0.6543],[0.0075,0.6726],[0.0082,0.6903],[0.0094,0.7070],[0.0108,0.7227],[0.0127,0.7371],[0.0150,0.7502],[0.0177,0.7620],[0.0210,0.7728],[0.0246,0.7827],[0.0286,0.7917],[0.0330,0.7998],[0.0378,0.8070],[0.0427,0.8134],[0.0480,0.8189],[0.0534,0.8237],[0.0590,0.8278],[0.0647,0.8311],[0.0705,0.8338],[0.0765,0.8355],[0.0830,0.8359],[0.0897,0.8352],[0.0968,0.8336],[0.1040,0.8313],[0.1114,0.8283],[0.1188,0.8249],[0.1263,0.8211],[0.1336,0.8172],[0.1409,0.8132],[0.1479,0.8094],[0.1547,0.8059],[0.1613,0.8025],[0.1678,0.7988],[0.1741,0.7949],[0.1805,0.7908],[0.1867,0.7866],[0.1929,0.7822],[0.1991,0.7777],[0.2052,0.7731],[0.2113,0.7685],[0.2174,0.7638],[0.2235,0.7590],[0.2296,0.7543],[0.2357,0.7495],[0.2418,0.7446],[0.2478,0.7397],[0.2538,0.7346],[0.2598,0.7295],[0.2658,0.7243],[0.2718,0.7191],[0.2777,0.7138],[0.2837,0.7085],[0.2897,0.7031],[0.2956,0.6977],[0.3016,0.6923],[0.3076,0.6869],[0.3136,0.6814],[0.3195,0.6758],[0.3255,0.6702],[0.3315,0.6646],[0.3374,0.6589],[0.3434,0.6532],[0.3493,0.6475],[0.3553,0.6417],[0.3612,0.6360],[0.3672,0.6302],[0.3731,0.6245],[0.3790,0.6187],[0.3850,0.6130],[0.3909,0.6072],[0.3969,0.6013],[0.4029,0.5955],[0.4088,0.5896],[0.4147,0.5838],[0.4206,0.5779],[0.4265,0.5721],[0.4324,0.5663],[0.4383,0.5605],[0.4441,0.5547],[0.4499,0.5489],[0.4557,0.5432],[0.4615,0.5374],[0.4673,0.5317],[0.4731,0.5259],[0.4788,0.5202],[0.4845,0.5145],[0.4902,0.5088],[0.4959,0.5032],[0.5015,0.4976],[0.5070,0.4921],[0.5125,0.4866],[0.5180,0.4812],[0.5234,0.4757],[0.5288,0.4703],[0.5342,0.4650],[0.5396,0.4597],[0.5449,0.4544],[0.5501,0.4492],[0.5553,0.4440],[0.5604,0.4389],[0.5654,0.4339],[0.5704,0.4290],[0.5752,0.4242],[0.5799,0.4195],[0.5846,0.4148],[0.5892,0.4102],[0.5938,0.4057],[0.5982,0.4012],[0.6026,0.3969],[0.6069,0.3926],[0.6111,0.3884],[0.6152,0.3842],[0.6192,0.3802],[0.6232,0.3763],[0.6270,0.3725],[0.6307,0.3688],[0.6344,0.3652],[0.6379,0.3616],[0.6414,0.3582],[0.6448,0.3549],[0.6480,0.3516],[0.6512,0.3485],[0.6543,0.3454],[0.6573,0.3424],[0.6602,0.3395],[0.6631,0.3367],[0.6658,0.3340],[0.6684,0.3314],[0.6708,0.3290],[0.6731,0.3267],[0.6753,0.3245],[0.6773,0.3225],[0.6794,0.3205],[0.6813,0.3185],[0.6833,0.3165],[0.6853,0.3145],[0.6873,0.3125],[0.6893,0.3105],[0.6915,0.3083],[0.6938,0.3060],[0.6962,0.3036],[0.6986,0.3012],[0.7011,0.2987],[0.7037,0.2962],[0.7062,0.2937],[0.7086,0.2912],[0.7110,0.2889],[0.7132,0.2866],[0.7154,0.2845],[0.7173,0.2826],[0.7190,0.2809],[0.7205,0.2794],[0.7219,0.2780],[0.7232,0.2768],[0.7243,0.2756],[0.7253,0.2746],[0.7262,0.2737],[0.7270,0.2729],[0.7278,0.2722],[0.7284,0.2716],[0.7290,0.2710],[0.7295,0.2705],[0.7300,0.2700]];
function col(x,y,dim){
  if(y<=0.0005)y=0.0005;
  var X=x/y,Y=1,Z=(1-x-y)/y;
  var r=3.2406*X-1.5372*Y-0.4986*Z, g=-0.9689*X+1.8758*Y+0.0415*Z, b=0.0557*X-0.2040*Y+1.0570*Z;
  var out=(r<0||g<0||b<0);
  if(r<0)r=0; if(g<0)g=0; if(b<0)b=0;
  var m=Math.max(r,g,b); if(m<=0)m=1;
  r/=m;g/=m;b/=m;
  var G=1.0;
  r=Math.pow(r,G);g=Math.pow(g,G);b=Math.pow(b,G);
  var f=out?dim:1.0;
  return [r*255*f,g*255*f,b*255*f];
}
function paint(id,W,H,fx,fy,clip){
  var c=document.getElementById(id); if(!c)return;
  var ctx=c.getContext('2d');
  var off=document.createElement('canvas'); off.width=W; off.height=H;
  var octx=off.getContext('2d');
  var im=octx.createImageData(W,H), d=im.data;
  for(var j=0;j<H;j++){ for(var i=0;i<W;i++){
    var p=col(fx(i+0.5),fy(j+0.5),0.6); var k=(j*W+i)*4;
    d[k]=p[0]; d[k+1]=p[1]; d[k+2]=p[2]; d[k+3]=255; }}
  octx.putImageData(im,0,0);
  if(clip){ ctx.fillStyle='#232323'; ctx.fillRect(0,0,W,H); clip(ctx); }
  ctx.drawImage(off,0,0);
}
var OX=0.600, OY=560.500, SX=879.6250, SY=665.8750;
paint('cie',738,559,function(i){return (i+OX)/SX;},function(j){return (OY-j)/SY;},function(ctx){
  ctx.beginPath();
  for(var n=0;n<L.length;n++){var px=L[n][0]*SX-OX, py=OY-L[n][1]*SY; if(n==0)ctx.moveTo(px,py); else ctx.lineTo(px,py);}
  ctx.closePath(); ctx.clip();
});
var IXc=122.600, IYc=103.400, ISX=5000.000, ISY=4200.000;
paint('ins',248,209,function(i){return 0.4193+(i-IXc)/ISX;},function(j){return 0.5053-(j-IYc)/ISY;},null);
})();
</script><svg class="a" style="left:0;top:0" width="1920" height="1044"><line x1="1312.5" y1="677.0" x2="1804.5" y2="500.5" stroke="#4a2038" stroke-width="1"/><rect x="1414.4" y="268.0" width="16.0" height="16.0" fill="none" stroke="#ffffff" stroke-width="2"/><rect x="1417.6" y="307.2" width="16.0" height="16.0" fill="none" stroke="#ffffff" stroke-width="2"/><rect x="1419.3" y="342.6" width="16.0" height="16.0" fill="none" stroke="#ffffff" stroke-width="2"/><rect x="1422.2" y="376.7" width="16.0" height="16.0" fill="none" stroke="#ffffff" stroke-width="2"/><rect x="1423.7" y="412.1" width="16.0" height="16.0" fill="none" stroke="#ffffff" stroke-width="2"/><rect x="1520.0" y="331.6" width="16.0" height="16.0" fill="none" stroke="#ffffff" stroke-width="2"/><rect x="1500.0" y="356.3" width="16.0" height="16.0" fill="none" stroke="#ffffff" stroke-width="2"/><rect x="1482.9" y="378.4" width="16.0" height="16.0" fill="none" stroke="#ffffff" stroke-width="2"/><rect x="1464.2" y="399.5" width="16.0" height="16.0" fill="none" stroke="#ffffff" stroke-width="2"/><rect x="1445.4" y="424.8" width="16.0" height="16.0" fill="none" stroke="#ffffff" stroke-width="2"/><rect x="1282.5" y="627.7" width="16.0" height="16.0" fill="none" stroke="#ffffff" stroke-width="2"/><rect x="1313.7" y="589.3" width="16.0" height="16.0" fill="none" stroke="#ffffff" stroke-width="2"/><rect x="1341.9" y="555.1" width="16.0" height="16.0" fill="none" stroke="#ffffff" stroke-width="2"/><rect x="1369.6" y="520.9" width="16.0" height="16.0" fill="none" stroke="#ffffff" stroke-width="2"/><rect x="1397.4" y="485.3" width="16.0" height="16.0" fill="none" stroke="#ffffff" stroke-width="2"/><rect x="1433.0" y="566.2" width="16.0" height="16.0" fill="none" stroke="#ffffff" stroke-width="2"/><rect x="1431.4" y="541.2" width="16.0" height="16.0" fill="none" stroke="#ffffff" stroke-width="2"/><rect x="1430.0" y="518.1" width="16.0" height="16.0" fill="none" stroke="#ffffff" stroke-width="2"/><rect x="1430.0" y="498.0" width="16.0" height="16.0" fill="none" stroke="#ffffff" stroke-width="2"/><rect x="1428.4" y="472.8" width="16.0" height="16.0" fill="none" stroke="#ffffff" stroke-width="2"/><rect x="1348.9" y="449.7" width="16.0" height="16.0" fill="none" stroke="#ffffff" stroke-width="2"/><rect x="1364.6" y="449.7" width="16.0" height="16.0" fill="none" stroke="#ffffff" stroke-width="2"/><rect x="1380.3" y="449.7" width="16.0" height="16.0" fill="none" stroke="#ffffff" stroke-width="2"/><rect x="1396.0" y="449.7" width="16.0" height="16.0" fill="none" stroke="#ffffff" stroke-width="2"/><rect x="1411.7" y="449.7" width="16.0" height="16.0" fill="none" stroke="#ffffff" stroke-width="2"/><rect x="1482.7" y="448.0" width="16.0" height="16.0" fill="none" stroke="#ffffff" stroke-width="2"/><rect x="1541.7" y="448.0" width="16.0" height="16.0" fill="none" stroke="#ffffff" stroke-width="2"/><rect x="1594.0" y="448.0" width="16.0" height="16.0" fill="none" stroke="#ffffff" stroke-width="2"/><rect x="1649.0" y="448.0" width="16.0" height="16.0" fill="none" stroke="#ffffff" stroke-width="2"/><rect x="1713.5" y="448.0" width="16.0" height="16.0" fill="none" stroke="#ffffff" stroke-width="2"/><circle cx="1464.6" cy="297.9" r="5.2" fill="#00b000" stroke="#000" stroke-width="1.5"/><circle cx="1456.6" cy="338.0" r="5.2" fill="#40a848" stroke="#000" stroke-width="1.5"/><circle cx="1450.2" cy="370.6" r="5.2" fill="#58a860" stroke="#000" stroke-width="1.5"/><circle cx="1444.4" cy="400.1" r="5.2" fill="#78b078" stroke="#000" stroke-width="1.5"/><circle cx="1439.5" cy="429.6" r="5.2" fill="#98b898" stroke="#000" stroke-width="1.5"/><circle cx="1532.6" cy="352.0" r="5.2" fill="#c0c000" stroke="#000" stroke-width="1.5"/><circle cx="1509.5" cy="377.0" r="5.2" fill="#b8b050" stroke="#000" stroke-width="1.5"/><circle cx="1489.2" cy="398.4" r="5.2" fill="#b0b068" stroke="#000" stroke-width="1.5"/><circle cx="1470.7" cy="417.0" r="5.2" fill="#b8b888" stroke="#000" stroke-width="1.5"/><circle cx="1451.7" cy="437.0" r="5.2" fill="#c0c0a0" stroke="#000" stroke-width="1.5"/><circle cx="1301.6" cy="598.9" r="5.2" fill="#0000c8" stroke="#000" stroke-width="1.5"/><circle cx="1332.6" cy="566.3" r="5.2" fill="#4848b8" stroke="#000" stroke-width="1.5"/><circle cx="1358.9" cy="538.6" r="5.2" fill="#6868b0" stroke="#000" stroke-width="1.5"/><circle cx="1382.2" cy="511.8" r="5.2" fill="#8080b0" stroke="#000" stroke-width="1.5"/><circle cx="1408.4" cy="485.9" r="5.2" fill="#a0a0b8" stroke="#000" stroke-width="1.5"/><circle cx="1417.9" cy="549.2" r="5.2" fill="#c000b8" stroke="#000" stroke-width="1.5"/><circle cx="1422.3" cy="527.1" r="5.2" fill="#c048b0" stroke="#000" stroke-width="1.5"/><circle cx="1425.5" cy="508.8" r="5.2" fill="#c070b8" stroke="#000" stroke-width="1.5"/><circle cx="1428.9" cy="493.3" r="5.2" fill="#c090c0" stroke="#000" stroke-width="1.5"/><circle cx="1431.9" cy="474.8" r="5.2" fill="#c0a8c0" stroke="#000" stroke-width="1.5"/><circle cx="1374.2" cy="462.1" r="5.2" fill="#00b0b8" stroke="#000" stroke-width="1.5"/><circle cx="1390.0" cy="459.1" r="5.2" fill="#40b0b0" stroke="#000" stroke-width="1.5"/><circle cx="1401.0" cy="459.1" r="5.2" fill="#68b0b0" stroke="#000" stroke-width="1.5"/><circle cx="1413.4" cy="457.7" r="5.2" fill="#90b8b8" stroke="#000" stroke-width="1.5"/><circle cx="1424.3" cy="457.7" r="5.2" fill="#a8bcbc" stroke="#000" stroke-width="1.5"/><circle cx="1473.8" cy="453.8" r="5.2" fill="#c09090" stroke="#000" stroke-width="1.5"/><circle cx="1513.9" cy="452.4" r="5.2" fill="#c07070" stroke="#000" stroke-width="1.5"/><circle cx="1553.9" cy="450.7" r="5.2" fill="#c05858" stroke="#000" stroke-width="1.5"/><circle cx="1597.0" cy="450.0" r="5.2" fill="#c03838" stroke="#000" stroke-width="1.5"/><circle cx="1649.0" cy="448.5" r="5.2" fill="#c01818" stroke="#000" stroke-width="1.5"/><rect x="1427.0" y="449.7" width="16.0" height="16.0" fill="none" stroke="#000000" stroke-width="2"/><circle cx="1435.0" cy="456.0" r="5.2" fill="#ffffff" stroke="#000" stroke-width="1.5"/><rect x="1758.1" y="220.9" width="15.0" height="15.0" fill="none" stroke="#ffffff" stroke-width="2"/><circle cx="1791.6" cy="309.5" r="5.0" fill="#c0c000" stroke="#000" stroke-width="1.5"/></svg><div class="a nw" style="left:1469.17px;top:94.70px;width:93.05px;font-size:16.72px;line-height:21px;color:#e6e6e6;transform:scaleX(0.9665);transform-origin:50% 0;">CIE 1931 xy</div><div class="a nw" style="left:1154.75px;top:686.70px;width:11.30px;font-size:16.72px;line-height:21px;color:#e6e6e6;">0</div><div class="a nw" style="left:1235.74px;top:686.70px;width:25.24px;font-size:16.72px;line-height:21px;color:#e6e6e6;">0,1</div><div class="a nw" style="left:1129.16px;top:601.42px;width:25.24px;font-size:16.72px;line-height:21px;color:#e6e6e6;">0,1</div><div class="a nw" style="left:1323.71px;top:686.70px;width:25.24px;font-size:16.72px;line-height:21px;color:#e6e6e6;">0,2</div><div class="a nw" style="left:1129.16px;top:534.83px;width:25.24px;font-size:16.72px;line-height:21px;color:#e6e6e6;">0,2</div><div class="a nw" style="left:1411.67px;top:686.70px;width:25.24px;font-size:16.72px;line-height:21px;color:#e6e6e6;">0,3</div><div class="a nw" style="left:1129.16px;top:468.24px;width:25.24px;font-size:16.72px;line-height:21px;color:#e6e6e6;">0,3</div><div class="a nw" style="left:1499.63px;top:686.70px;width:25.24px;font-size:16.72px;line-height:21px;color:#e6e6e6;">0,4</div><div class="a nw" style="left:1129.16px;top:401.65px;width:25.24px;font-size:16.72px;line-height:21px;color:#e6e6e6;">0,4</div><div class="a nw" style="left:1587.59px;top:686.70px;width:25.24px;font-size:16.72px;line-height:21px;color:#e6e6e6;">0,5</div><div class="a nw" style="left:1129.16px;top:335.07px;width:25.24px;font-size:16.72px;line-height:21px;color:#e6e6e6;">0,5</div><div class="a nw" style="left:1675.56px;top:686.70px;width:25.24px;font-size:16.72px;line-height:21px;color:#e6e6e6;">0,6</div><div class="a nw" style="left:1129.16px;top:268.48px;width:25.24px;font-size:16.72px;line-height:21px;color:#e6e6e6;">0,6</div><div class="a nw" style="left:1763.52px;top:686.70px;width:25.24px;font-size:16.72px;line-height:21px;color:#e6e6e6;">0,7</div><div class="a nw" style="left:1129.16px;top:201.89px;width:25.24px;font-size:16.72px;line-height:21px;color:#e6e6e6;">0,7</div><div class="a nw" style="left:1851.48px;top:686.70px;width:25.24px;font-size:16.72px;line-height:21px;color:#e6e6e6;">0,8</div><div class="a nw" style="left:1129.16px;top:135.30px;width:25.24px;font-size:16.72px;line-height:21px;color:#e6e6e6;">0,8</div><div class="a nw" style="left:1143.10px;top:668.00px;width:11.30px;font-size:16.72px;line-height:21px;color:#e6e6e6;">0</div><div class="a" style="left:0;top:996.5px;width:1920px;height:47.5px;background:linear-gradient(#2e2e2e 0px,#454545 4px,#3a3a3a 20px,#2a2a2a 47px)"></div><div class="a" style="left:1px;top:997.5px;width:33px;height:46.5px;border-radius:3px 3px 0 0;background:linear-gradient(#9a9a9a,#6a6a6a 60%,#5a5a5a)"></div><div class="a" style="left:12px;top:999.5px;width:11px;height:11px;border-radius:50%;background:linear-gradient(#555,#8a8a8a)"></div><svg class="a" style="left:13.5px;top:1002px" width="8" height="5"><polygon points="0,4.5 8,4.5 4,0" fill="#222"/></svg><div class="a" style="left:4.6px;top:1017px;width:26.4px;height:22.8px;border-radius:3px;background:#ffff00;box-shadow:0 0 0 1px #7a7a40"></div><div class="a" style="left:39.0px;top:997.5px;width:112.5px;height:46.5px;border-radius:3px 3px 0 0;background:linear-gradient(#a8a8a8,#8a8a8a 40%,#5c5c5c)"></div><div class="a" style="left:43.0px;top:1001.8px;width:104.0px;height:26.6px;border-radius:3px;background:#c2c1a3;box-shadow:0 0 0 1px #8a8a70, inset 0 1px 1px rgba(0,0,0,0.25)"></div><div class="a nw" style="left:87.10px;top:1033.18px;width:18.29px;font-size:8.14px;line-height:10px;color:#262626;font-weight:bold;">20%</div><div class="a" style="left:153.0px;top:997.5px;width:112.5px;height:46.5px;border-radius:3px 3px 0 0;background:linear-gradient(#a8a8a8,#8a8a8a 40%,#5c5c5c)"></div><div class="a" style="left:157.0px;top:1001.8px;width:104.0px;height:26.6px;border-radius:3px;background:#c3c185;box-shadow:0 0 0 1px #8a8a70, inset 0 1px 1px rgba(0,0,0,0.25)"></div><div class="a nw" style="left:201.10px;top:1033.18px;width:18.29px;font-size:8.14px;line-height:10px;color:#262626;font-weight:bold;">40%</div><div class="a" style="left:267.0px;top:997.5px;width:112.5px;height:46.5px;border-radius:3px 3px 0 0;background:linear-gradient(#a8a8a8,#8a8a8a 40%,#5c5c5c)"></div><div class="a" style="left:271.0px;top:1001.8px;width:104.0px;height:26.6px;border-radius:3px;background:#c3c16a;box-shadow:0 0 0 1px #8a8a70, inset 0 1px 1px rgba(0,0,0,0.25)"></div><div class="a nw" style="left:315.10px;top:1033.18px;width:18.29px;font-size:8.14px;line-height:10px;color:#262626;font-weight:bold;">60%</div><div class="a" style="left:381.0px;top:997.5px;width:112.5px;height:46.5px;border-radius:3px 3px 0 0;background:linear-gradient(#a8a8a8,#8a8a8a 40%,#5c5c5c)"></div><div class="a" style="left:385.0px;top:1001.8px;width:104.0px;height:26.6px;border-radius:3px;background:#c3c04a;box-shadow:0 0 0 1px #8a8a70, inset 0 1px 1px rgba(0,0,0,0.25)"></div><div class="a nw" style="left:429.10px;top:1033.18px;width:18.29px;font-size:8.14px;line-height:10px;color:#262626;font-weight:bold;">80%</div><div class="a" style="left:496.0px;top:997.5px;width:112.5px;height:46.5px;border-radius:3px 3px 0 0;background:linear-gradient(#1a1a1a,#262626 40%,#333333)"></div><div class="a" style="left:498.75px;top:1001.25px;width:105px;height:26.85px;border-radius:3px;background:#c4c000"></div><div class="a nw" style="left:540.84px;top:1032.93px;width:22.82px;font-size:8.14px;line-height:10px;color:#ffffff;font-weight:bold;">100%</div><div class="a" style="left:1678px;top:997.2px;width:35.4px;height:46.8px;border-radius:3px 3px 0 0;background:linear-gradient(#a0a0a0,#707070 28%,#8a8a8a 32%,#6a6a6a)"></div><div class="a" style="left:1689px;top:998px;width:12.5px;height:12.5px;border-radius:50%;background:linear-gradient(#606060,#9a9a9a)"></div><svg class="a" style="left:1691.4px;top:1001px" width="8" height="5"><polygon points="0,4.5 8,4.5 4,0" fill="#222"/></svg><div class="a" style="left:1684px;top:1016px;width:19px;height:18.4px;border:2px solid #111;border-radius:3px;background:linear-gradient(#c8c8c8,#8a8a8a)"></div><div class="a" style="left:1689px;top:1021px;width:13px;height:11px;background:#000"></div><div class="a" style="left:1715.3px;top:997.2px;width:32.9px;height:22.4px;border-radius:3px 3px 0 0;background:linear-gradient(#a8a8a8,#8c8c8c 50%,#767676)"></div><svg class="a" style="left:1722.8px;top:999px" width="18" height="18"><defs><linearGradient id="ic0" x1="0" x2="0" y1="0" y2="1"><stop offset="0" stop-color="#6e6e6e"/><stop offset="1" stop-color="#a8a8a8"/></linearGradient></defs><circle cx="9" cy="9" r="8" fill="url(#ic0)"/><g transform="translate(9,9)"><rect x="-3" y="-3" width="6" height="6" fill="#111"/></g></svg><div class="a" style="left:1749.0px;top:997.2px;width:32.7px;height:22.4px;border-radius:3px 3px 0 0;background:linear-gradient(#a8a8a8,#8c8c8c 50%,#767676)"></div><svg class="a" style="left:1756.3px;top:999px" width="18" height="18"><defs><linearGradient id="ic1" x1="0" x2="0" y1="0" y2="1"><stop offset="0" stop-color="#6e6e6e"/><stop offset="1" stop-color="#a8a8a8"/></linearGradient></defs><circle cx="9" cy="9" r="8" fill="url(#ic1)"/><g transform="translate(9,9)"><polygon points="-2.5,-4 4,0 -2.5,4" fill="#111"/></g></svg><div class="a" style="left:1782.5px;top:997.2px;width:32.7px;height:22.4px;border-radius:3px 3px 0 0;background:linear-gradient(#a8a8a8,#8c8c8c 50%,#767676)"></div><svg class="a" style="left:1789.8px;top:999px" width="18" height="18"><defs><linearGradient id="ic2" x1="0" x2="0" y1="0" y2="1"><stop offset="0" stop-color="#6e6e6e"/><stop offset="1" stop-color="#a8a8a8"/></linearGradient></defs><circle cx="9" cy="9" r="8" fill="url(#ic2)"/><g transform="translate(9,9)"><path d="M-4,-4 h-1.2 v8 h1.2 M4,-4 h1.2 v8 h-1.2 M-2,0 h4" stroke="#111" stroke-width="1.3" fill="none"/></g></svg><div class="a" style="left:1816.0px;top:997.2px;width:33.2px;height:22.4px;border-radius:3px 3px 0 0;background:linear-gradient(#a8a8a8,#8c8c8c 50%,#767676)"></div><svg class="a" style="left:1823.6px;top:999px" width="18" height="18"><defs><linearGradient id="ic3" x1="0" x2="0" y1="0" y2="1"><stop offset="0" stop-color="#6e6e6e"/><stop offset="1" stop-color="#a8a8a8"/></linearGradient></defs><circle cx="9" cy="9" r="8" fill="url(#ic3)"/><g transform="translate(9,9)"><path d="M0,0 C-2,-3 -5,-3 -5,0 C-5,3 -2,3 0,0 C2,-3 5,-3 5,0 C5,3 2,3 0,0" stroke="#111" stroke-width="1.5" fill="none"/></g></svg><div class="a" style="left:1850.0px;top:997.2px;width:33.2px;height:22.4px;border-radius:3px 3px 0 0;background:linear-gradient(#a8a8a8,#8c8c8c 50%,#767676)"></div><svg class="a" style="left:1857.6px;top:999px" width="18" height="18"><defs><linearGradient id="ic4" x1="0" x2="0" y1="0" y2="1"><stop offset="0" stop-color="#6e6e6e"/><stop offset="1" stop-color="#a8a8a8"/></linearGradient></defs><circle cx="9" cy="9" r="8" fill="url(#ic4)"/><g transform="translate(9,9)"><path d="M-4,-1 A4,4 0 0 1 3.5,-2 M4,1 A4,4 0 0 1 -3.5,2" stroke="#111" stroke-width="1.5" fill="none"/><polygon points="2,-4.5 5,-1 1.5,-0.5" fill="#111"/><polygon points="-2,4.5 -5,1 -1.5,0.5" fill="#111"/></g></svg><div class="a" style="left:1884px;top:997.2px;width:36px;height:22.4px;background:linear-gradient(#2a2a2a,#333)"></div><div class="a" style="left:1893.6px;top:1000.5px;width:16px;height:16px;border-radius:50%;background:#262626"></div><div class="a" style="left:1715.3px;top:1019.6px;width:100.7px;height:24.4px;border-radius:3px 3px 0 0;background:linear-gradient(#b0b0b0,#959595 50%,#7e7e7e)"></div><div class="a" style="left:1730.5px;top:1024px;width:15px;height:15px;border-radius:50%;background:linear-gradient(#8a8a8a,#b0b0b0)"></div><div class="a nw" style="left:1733.55px;top:1021.96px;width:10.89px;font-size:15.99px;line-height:20px;color:#2a2a2a;font-weight:bold;transform:scaleX(0.8997);transform-origin:50% 0;">«</div><div class="a nw" style="left:1754.63px;top:1021.80px;width:44.74px;font-size:17.88px;line-height:22px;color:#262626;font-weight:bold;transform:scaleX(0.8891);transform-origin:50% 0;">Back</div><div class="a" style="left:1816.6px;top:1019.6px;width:101.4px;height:24.4px;border-radius:3px 3px 0 0;background:linear-gradient(#b0b0b0,#959595 50%,#7e7e7e)"></div><div class="a" style="left:1889.5px;top:1024px;width:15px;height:15px;border-radius:50%;background:linear-gradient(#8a8a8a,#b0b0b0)"></div><div class="a nw" style="left:1892.55px;top:1021.96px;width:10.89px;font-size:15.99px;line-height:20px;color:#2a2a2a;font-weight:bold;transform:scaleX(0.8997);transform-origin:50% 0;">»</div><div class="a nw" style="left:1837.62px;top:1021.80px;width:40.75px;font-size:17.88px;line-height:22px;color:#262626;font-weight:bold;transform:scaleX(0.9806);transform-origin:50% 0;">Next</div></body></html>
